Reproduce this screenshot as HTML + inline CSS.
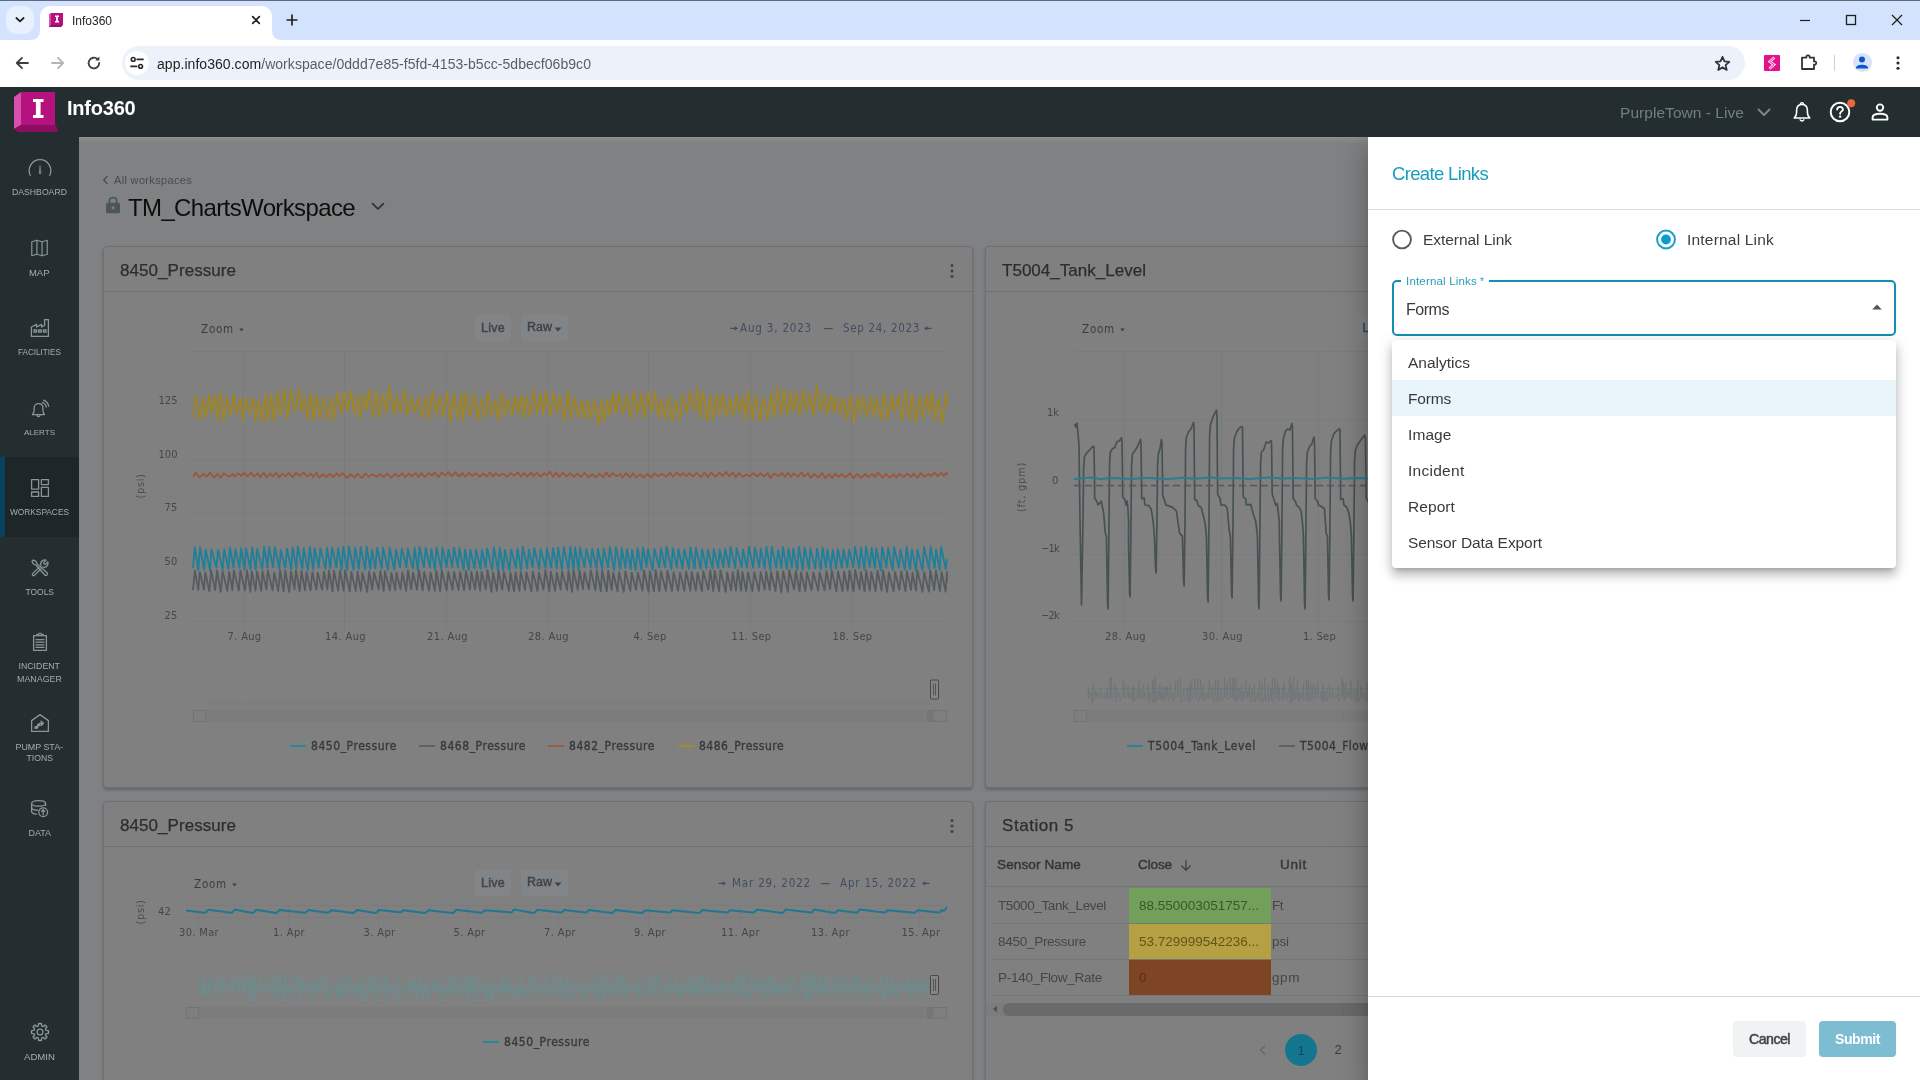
<!DOCTYPE html>
<html lang="en"><head><meta charset="utf-8"><title>Info360</title>
<style>
*{box-sizing:border-box;margin:0;padding:0}
html,body{width:1920px;height:1080px;overflow:hidden;background:#7f8182;font-family:"Liberation Sans",sans-serif}
.a{position:absolute}
.t{position:absolute;white-space:nowrap;display:block}
svg{position:absolute;overflow:visible}
#root{position:absolute;left:0;top:0;width:1920px;height:1080px;will-change:transform}

</style></head>
<body>
<div id="root">
<div class="a" style="left:0;top:0;width:1920px;height:40px;background:#d3e3fd;border-top:1px solid #5d6b7c"></div>
<div class="a" style="left:6px;top:6px;width:28px;height:28px;border-radius:10px;background:#e9f0fd"></div>
<svg style="left:14px;top:15px" width="12" height="10" viewBox="0 0 12 10"><path d="M2.4 3 L6 6.4 L9.6 3" fill="none" stroke="#1f1f1f" stroke-width="1.8" stroke-linecap="round" stroke-linejoin="round"/></svg>
<div class="a" style="left:40px;top:6px;width:232px;height:34px;background:#fff;border-radius:10px 10px 0 0"></div>
<svg style="left:30px;top:30px" width="252" height="10" viewBox="0 0 252 10"><path d="M0 10 Q10 10 10 0 L10 10 Z M252 10 Q242 10 242 0 L242 10 Z" fill="#fff"/></svg>
<svg style="left:48px;top:12px" width="16" height="16" viewBox="0 0 16 16"><path d="M1 3 L3 1 L15 1 L15 13 L13 15 L1 15 Z" fill="#8c1466"/><path d="M3 1 H15 V13 H3 Z" fill="#b5107f"/><path d="M1 3 L3 1 V13 L1 15 Z" fill="#d552a8"/><path d="M7 3.5 H11 V5 H9.9 V9 H11 V10.5 H7 V9 H8.1 V5 H7 Z" fill="#fff"/></svg>
<span class="t" style="left:72px;top:12.5px;font:400 12px/16px 'Liberation Sans',sans-serif;color:#1f1f1f;letter-spacing:-0.007px;">Info360</span>
<svg style="left:250px;top:14px" width="12" height="12" viewBox="0 0 12 12"><path d="M2.7 2.7 L9.3 9.3 M9.3 2.7 L2.7 9.3" stroke="#1f1f1f" stroke-width="1.7" stroke-linecap="round"/></svg>
<svg style="left:285px;top:13px" width="14" height="14" viewBox="0 0 14 14"><path d="M7 2.2 V11.8 M2.2 7 H11.8" stroke="#1f1f1f" stroke-width="1.7" stroke-linecap="round"/></svg>
<svg style="left:1799px;top:14px" width="12" height="12" viewBox="0 0 12 12"><path d="M1 6.5 H11" stroke="#1f1f1f" stroke-width="1.2"/></svg>
<svg style="left:1845px;top:14px" width="12" height="12" viewBox="0 0 12 12"><rect x="1.5" y="1.5" width="9" height="9" fill="none" stroke="#1f1f1f" stroke-width="1.3"/></svg>
<svg style="left:1891px;top:14px" width="12" height="12" viewBox="0 0 12 12"><path d="M1 1 L11 11 M11 1 L1 11" stroke="#1f1f1f" stroke-width="1.3"/></svg>
<div class="a" style="left:0;top:40px;width:1920px;height:47px;background:#fff"></div>
<svg style="left:14px;top:55px" width="16" height="16" viewBox="0 0 16 16"><path d="M14 8 H3 M8 2.8 L2.8 8 L8 13.2" fill="none" stroke="#3c3c3c" stroke-width="1.8" stroke-linecap="round" stroke-linejoin="round"/></svg>
<svg style="left:50px;top:55px" width="16" height="16" viewBox="0 0 16 16"><path d="M2 8 H13 M8 2.8 L13.2 8 L8 13.2" fill="none" stroke="#b4b4b4" stroke-width="1.8" stroke-linecap="round" stroke-linejoin="round"/></svg>
<svg style="left:86px;top:55px" width="16" height="16" viewBox="0 0 16 16"><path d="M13.2 8 A5.3 5.3 0 1 1 11.6 4.2" fill="none" stroke="#3c3c3c" stroke-width="1.8" stroke-linecap="round"/><path d="M9.2 5.6 H13.4 V1.4 Z" fill="#3c3c3c"/></svg>
<div class="a" style="left:122px;top:46px;width:1623px;height:34px;border-radius:17px;background:#edf1f9"></div>
<div class="a" style="left:125px;top:51px;width:24px;height:24px;border-radius:12px;background:#fff"></div>
<svg style="left:129px;top:56px" width="16" height="14" viewBox="0 0 16 14"><circle cx="4.2" cy="3.4" r="1.9" fill="none" stroke="#2a2a2a" stroke-width="1.6"/><path d="M8.2 3.4 H14" stroke="#2a2a2a" stroke-width="1.7" stroke-linecap="round"/><circle cx="11.6" cy="10.4" r="1.9" fill="none" stroke="#2a2a2a" stroke-width="1.6"/><path d="M2 10.4 H7.6" stroke="#2a2a2a" stroke-width="1.7" stroke-linecap="round"/></svg>
<span class="t" style="left:157px;top:54.5px;font:400 14px/18px 'Liberation Sans',sans-serif;color:#1f1f1f;letter-spacing:0.045px;">app.info360.com<span style="color:#5a5e63">/workspace/0ddd7e85-f5fd-4153-b5cc-5dbecf06b9c0</span></span>
<svg style="left:1713.5px;top:54.5px" width="17" height="17" viewBox="0 0 18 18"><path d="M9 2 L11.1 6.8 L16.2 7.3 L12.3 10.7 L13.5 15.8 L9 13.1 L4.5 15.8 L5.7 10.7 L1.8 7.3 L6.9 6.8 Z" fill="none" stroke="#30343a" stroke-width="1.9" stroke-linejoin="round"/></svg>
<div class="a" style="left:1764px;top:55px;width:16px;height:16px;border-radius:1px;background:#e3128c"></div>
<svg style="left:1764px;top:55px" width="16" height="16" viewBox="0 0 16 16"><path d="M10.4 2.4 L5.8 6.6 L10 9.6 L5.4 13.8" fill="none" stroke="#ffd9ee" stroke-width="2.7" stroke-linejoin="miter"/><path d="M10.4 2.4 L5.8 6.6 L10 9.6 L5.4 13.8" fill="none" stroke="#e3128c" stroke-width="0.8"/></svg>
<svg style="left:1799px;top:52px" width="20" height="20" viewBox="0 0 20 20"><path d="M3 5.6 H7.4 C6.6 2.6 11.4 2.6 10.6 5.6 H15 V9.4 C18 8.6 18 13.4 15 12.6 V17 H3 Z" fill="none" stroke="#30343a" stroke-width="1.8" stroke-linejoin="round"/></svg>
<div class="a" style="left:1834px;top:55px;width:1px;height:16px;background:#c3d0e6"></div>
<div class="a" style="left:1852.5px;top:53px;width:19px;height:19px;border-radius:10px;background:#d6e3fa"></div>
<svg style="left:1851px;top:52px" width="22" height="22" viewBox="0 0 22 22"><circle cx="11" cy="7.6" r="3" fill="#0b57d0"/><path d="M4.9 16.2 C4.9 11.6 17.1 11.6 17.1 16.2 V16.6 H4.9 Z" fill="#0b57d0"/></svg>
<svg style="left:1895px;top:54px" width="6" height="18" viewBox="0 0 6 18"><circle cx="3" cy="3.7" r="1.55" fill="#2a2a2a"/><circle cx="3" cy="9" r="1.55" fill="#2a2a2a"/><circle cx="3" cy="14.3" r="1.55" fill="#2a2a2a"/></svg>
<div class="a" style="left:0;top:87px;width:1920px;height:50px;background:#242e31"></div>
<svg style="left:14px;top:91px" width="44" height="42" viewBox="0 0 44 42"><path d="M0 6 L7 1 L7 34 L0 38 Z" fill="#d94fae"/><path d="M0 38 L7 34 L42 34 L44 41 L4 41 Z" fill="#8a0f60"/><path d="M7 1 H41 V34 H7 Z" fill="#b5117f"/><path d="M19 8 H29.5 V11 H26.6 V24 H29.5 V27 H19 V24 H21.9 V11 H19 Z" fill="#fff"/></svg>
<span class="t" style="left:67px;top:95.3px;font:700 20px/26px 'Liberation Sans',sans-serif;color:#ffffff;letter-spacing:-0.219px;">Info360</span>
<span class="t" style="left:1620px;top:102.5px;font:400 15.5px/20px 'Liberation Sans',sans-serif;color:#6f8085;letter-spacing:0.047px;">PurpleTown - Live</span>
<svg style="left:1757px;top:108px" width="14" height="9" viewBox="0 0 14 9"><path d="M1.5 1.5 L7 7 L12.5 1.5" fill="none" stroke="#7b8b90" stroke-width="1.8" stroke-linecap="round" stroke-linejoin="round"/></svg>
<svg style="left:1791px;top:101px" width="22" height="22" viewBox="0 0 22 22"><path d="M3.2 17 H18.8 C17.2 15.6 16.4 14 16.4 11.6 V9 C16.4 5.6 14.2 3.4 11 3.4 C7.8 3.4 5.6 5.6 5.6 9 V11.6 C5.6 14 4.8 15.6 3.2 17 Z" fill="none" stroke="#fff" stroke-width="1.6" stroke-linejoin="round"/><path d="M9.4 3.6 C9.4 1 12.6 1 12.6 3.6" fill="none" stroke="#fff" stroke-width="1.4"/><path d="M9 18.2 C9.2 20.6 12.8 20.6 13 18.2" fill="none" stroke="#fff" stroke-width="1.4"/></svg>
<svg style="left:1829px;top:98px" width="28" height="26" viewBox="0 0 28 26"><circle cx="11" cy="14" r="9.3" fill="none" stroke="#fff" stroke-width="2"/><path d="M8.2 11.6 C8.2 8 13.9 8 13.9 11.4 C13.9 13.4 11.1 13.4 11.1 15.8" fill="none" stroke="#fff" stroke-width="1.9" stroke-linecap="round"/><circle cx="11.1" cy="18.6" r="1.2" fill="#fff"/><circle cx="22.2" cy="5.2" r="4" fill="#e8683d"/></svg>
<svg style="left:1870px;top:102px" width="20" height="20" viewBox="0 0 20 20"><circle cx="10" cy="5.6" r="3.2" fill="none" stroke="#fff" stroke-width="1.9"/><path d="M2.6 17.6 V15.4 C2.6 10.6 17.4 10.6 17.4 15.4 V17.6 Z" fill="none" stroke="#fff" stroke-width="1.9" stroke-linejoin="round"/></svg>
<div class="a" style="left:0;top:137px;width:79px;height:943px;background:#242e31"></div>
<div class="a" style="left:0;top:457px;width:79px;height:80px;background:#1e2629"></div>
<div class="a" style="left:0;top:457px;width:5px;height:80px;background:#07425f"></div>
<svg style="left:27.5px;top:158.0px" width="24" height="24" viewBox="0 0 24 24" fill="none" stroke="#8a9598" stroke-width="1.3" stroke-linecap="round" stroke-linejoin="round"><path d="M2.3 17.25 A10.8 10.8 0 1 1 21.7 17.25"/><path d="M12 7.6 L11.2 15.4 A0.9 0.9 0 0 0 12.8 15.4 Z" fill="#8a9598" stroke-width="0.5"/></svg>
<svg style="left:30.0px;top:239.10000000000002px" width="19" height="18.4" viewBox="0 0 20 20" fill="none" stroke="#8a9598" stroke-width="1.3" stroke-linecap="round" stroke-linejoin="round"><path d="M1.6 3 L7.2 1.4 L12.8 3 L18.4 1.4 V16.6 L12.8 18.2 L7.2 16.6 L1.6 18.2 Z"/><path d="M7.2 1.4 V16.6 M12.8 3 V18.2"/></svg>
<svg style="left:29.5px;top:318.0px" width="20" height="20" viewBox="0 0 20 20" fill="none" stroke="#8a9598" stroke-width="1.3" stroke-linecap="round" stroke-linejoin="round"><path d="M1.4 18.4 V9 L6.6 6.4 V9 L11.6 6.4 V9 L14.6 7.4 V1.6 H18.4 V18.4 Z"/><rect x="4" y="12" width="2.6" height="2.2"/><rect x="8.7" y="12" width="2.6" height="2.2"/><rect x="13.4" y="12" width="2.6" height="2.2"/></svg>
<svg style="left:29.5px;top:399.0px" width="20" height="20" viewBox="0 0 20 20" fill="none" stroke="#8a9598" stroke-width="1.3" stroke-linecap="round" stroke-linejoin="round"><path d="M2.4 15.6 H14.6 C13.4 14.4 12.9 13 12.9 11.2 V9.4 C12.9 6.4 11 4.6 8.5 4.6 C6 4.6 4.1 6.4 4.1 9.4 V11.2 C4.1 13 3.6 14.4 2.4 15.6 Z"/><path d="M7 16.2 C7.2 18 9.8 18 10 16.2"/><path d="M12.4 3.4 C14.4 4.2 15.8 5.8 16.4 8"/><path d="M13.6 1.2 C16.2 2.2 18 4.4 18.8 7.4"/></svg>
<svg style="left:29.5px;top:478.0px" width="20" height="20" viewBox="0 0 20 20" fill="none" stroke="#8a9598" stroke-width="1.3" stroke-linecap="round" stroke-linejoin="round"><rect x="1.6" y="1.6" width="7" height="9.6"/><rect x="11.4" y="1.6" width="7" height="5"/><rect x="1.6" y="14" width="7" height="4.4"/><rect x="11.4" y="9.4" width="7" height="9"/></svg>
<svg style="left:29.5px;top:558.0px" width="20" height="20" viewBox="0 0 20 20" fill="none" stroke="#8a9598" stroke-width="1.3" stroke-linecap="round" stroke-linejoin="round"><path d="M2 3.4 L3.4 2 L6 3.4 L7 5.8 L16.8 14.6 C18.6 16.2 16.2 18.6 14.6 16.8 L5.8 7 L3.4 6 Z"/><path d="M9.2 9.4 L2.6 15.6 C1.6 16.6 3.4 18.4 4.4 17.4 L10.8 11"/><path d="M11 7.6 C10.4 5.6 11 3.6 12.6 2.6 C13.8 1.8 15 1.8 16 2.2 L13.6 4.6 L14 6 L15.4 6.4 L17.8 4 C18.2 5 18.2 6.2 17.4 7.4 C16.4 9 14.4 9.6 12.6 9"/></svg>
<svg style="left:31.5px;top:632.0px" width="16" height="20" viewBox="0 0 16 20" fill="none" stroke="#8a9598" stroke-width="1.3" stroke-linecap="round" stroke-linejoin="round"><rect x="1.6" y="3.6" width="12.8" height="14.8"/><path d="M5 3.6 V2.4 H6.6 C6.8 0.8 9.2 0.8 9.4 2.4 H11 V3.6"/><path d="M4 7.6 H12 M4 10.2 H12 M4 12.8 H12 M4 15.4 H12"/></svg>
<svg style="left:29.5px;top:713.0px" width="20" height="20" viewBox="0 0 20 20" fill="none" stroke="#8a9598" stroke-width="1.3" stroke-linecap="round" stroke-linejoin="round"><path d="M1.6 18.4 V7.6 L10 1.6 L18.4 7.6 V18.4 Z"/><path d="M5 15 H7.6 V12.6 H9.4 V10.4 H12.4 M11 8.4 L13.4 10.4 L11 12.4" stroke-width="1.5"/><rect x="4.6" y="13" width="2.6" height="2.6" fill="#8a9598" stroke="none"/><rect x="7" y="10.8" width="2.4" height="2.4" fill="#8a9598" stroke="none"/></svg>
<svg style="left:29.5px;top:798.8px" width="20" height="20" viewBox="0 0 20 20" fill="none" stroke="#8a9598" stroke-width="1.3" stroke-linecap="round" stroke-linejoin="round"><ellipse cx="8.6" cy="4.4" rx="7" ry="2.8"/><path d="M1.6 4.4 V8.4 C1.6 10 4.6 11.2 8 11.2"/><path d="M15.6 4.4 V6.4"/><path d="M1.6 8.4 V12.4 C1.6 13.8 3.6 14.8 6.4 15.2"/><circle cx="13.2" cy="13.2" r="4.4"/><path d="M13.2 15.8 V11 M11.6 12.4 L13.2 10.8 L14.8 12.4"/></svg>
<svg style="left:29.5px;top:1022.0px" width="20" height="20" viewBox="0 0 20 20" fill="none" stroke="#8a9598" stroke-width="1.3" stroke-linecap="round" stroke-linejoin="round"><path d="M8.55 1.52 L11.45 1.52 L11.56 3.90 L13.21 4.58 L14.96 2.98 L17.02 5.04 L15.42 6.79 L16.10 8.44 L18.48 8.55 L18.48 11.45 L16.10 11.56 L15.42 13.21 L17.02 14.96 L14.96 17.02 L13.21 15.42 L11.56 16.10 L11.45 18.48 L8.55 18.48 L8.44 16.10 L6.79 15.42 L5.04 17.02 L2.98 14.96 L4.58 13.21 L3.90 11.56 L1.52 11.45 L1.52 8.55 L3.90 8.44 L4.58 6.79 L2.98 5.04 L5.04 2.98 L6.79 4.58 L8.44 3.90 Z"/><circle cx="10" cy="10" r="2.9"/></svg>
<span class="t" style="left:12px;top:187.0px;font:400 8.68px/11px 'Liberation Sans',sans-serif;color:#a3adb0;">DASHBOARD</span>
<span class="t" style="left:29px;top:266.5px;font:400 9.46px/12px 'Liberation Sans',sans-serif;color:#a3adb0;">MAP</span>
<span class="t" style="left:18px;top:347.0px;font:400 8.15px/11px 'Liberation Sans',sans-serif;color:#a3adb0;">FACILITIES</span>
<span class="t" style="left:24px;top:427.5px;font:400 8.01px/10px 'Liberation Sans',sans-serif;color:#a3adb0;">ALERTS</span>
<span class="t" style="left:10px;top:507.0px;font:400 8.32px/11px 'Liberation Sans',sans-serif;color:#a3adb0;">WORKSPACES</span>
<span class="t" style="left:25.5px;top:587.0px;font:400 8.45px/11px 'Liberation Sans',sans-serif;color:#a3adb0;">TOOLS</span>
<span class="t" style="left:18.5px;top:661.0px;font:400 8.79px/11px 'Liberation Sans',sans-serif;color:#a3adb0;">INCIDENT</span>
<span class="t" style="left:17px;top:672.5px;font:400 8.9px/12px 'Liberation Sans',sans-serif;color:#a3adb0;">MANAGER</span>
<span class="t" style="left:15.5px;top:740.5px;font:400 8.88px/12px 'Liberation Sans',sans-serif;color:#a3adb0;">PUMP STA-</span>
<span class="t" style="left:26.5px;top:753.0px;font:400 8.67px/11px 'Liberation Sans',sans-serif;color:#a3adb0;">TIONS</span>
<span class="t" style="left:28.5px;top:826.5px;font:400 8.94px/12px 'Liberation Sans',sans-serif;color:#a3adb0;">DATA</span>
<span class="t" style="left:24px;top:1050.0px;font:400 9.62px/13px 'Liberation Sans',sans-serif;color:#a3adb0;">ADMIN</span>
<div class="a" style="left:79px;top:137px;width:1289px;height:943px;background:#7f8182"></div>
<div class="a" style="left:79px;top:137px;width:1289px;height:6px;background:linear-gradient(#8b9092,#7f8182)"></div>
<svg style="left:102px;top:175px" width="7" height="10" viewBox="0 0 7 10"><path d="M5 1.4 L1.8 5 L5 8.6" fill="none" stroke="#45494c" stroke-width="1.2" stroke-linecap="round" stroke-linejoin="round"/></svg>
<span class="t" style="left:114px;top:173.0px;font:400 11px/14px 'Liberation Sans',sans-serif;color:#484c4f;letter-spacing:0.331px;">All workspaces</span>
<svg style="left:105px;top:196px" width="16" height="18" viewBox="0 0 16 18"><rect x="1" y="6.8" width="14" height="10.4" rx="1.5" fill="#4b5659"/><path d="M4.4 7 V4.8 C4.4 0.6 11.6 0.6 11.6 4.8 V7" fill="none" stroke="#4b5659" stroke-width="1.8"/><circle cx="8" cy="11.8" r="1.5" fill="#7f8182"/></svg>
<span class="t" style="left:128px;top:192.0px;font:400 24px/31px 'Liberation Sans',sans-serif;color:#0d0d0d;letter-spacing:-0.628px;">TM_ChartsWorkspace</span>
<svg style="left:371px;top:202px" width="14" height="9" viewBox="0 0 14 9"><path d="M1.6 1.6 L7 7 L12.4 1.6" fill="none" stroke="#2c2f31" stroke-width="1.7" stroke-linecap="round" stroke-linejoin="round"/></svg>
<div class="a" style="left:103px;top:246px;width:870px;height:542px;background:#808080;border-radius:4px;border:1px solid #6c7075;box-shadow:0 2px 3px rgba(0,0,0,.22);"></div>
<div class="a" style="left:104px;top:291px;width:868px;height:1px;background:#6e7071"></div>
<span class="t" style="left:120px;top:259.5px;font:400 17px/22px 'Liberation Sans',sans-serif;color:#2d2d2d;letter-spacing:0.053px;-webkit-text-stroke:0.25px #2d2d2d;">8450_Pressure</span>
<svg style="left:949.5px;top:263px" width="4" height="16" viewBox="0 0 4 16"><circle cx="2" cy="2.4" r="1.5" fill="#3e4143"/><circle cx="2" cy="8" r="1.5" fill="#3e4143"/><circle cx="2" cy="13.6" r="1.5" fill="#3e4143"/></svg>
<div class="a" style="left:985px;top:246px;width:383px;height:542px;background:#808080;border-radius:4px;border:1px solid #6c7075;border-right:none;border-radius:4px 0 0 4px;box-shadow:0 2px 3px rgba(0,0,0,.22);"></div>
<div class="a" style="left:986px;top:291px;width:382px;height:1px;background:#6e7071"></div>
<span class="t" style="left:1002px;top:259.5px;font:400 17px/22px 'Liberation Sans',sans-serif;color:#2d2d2d;letter-spacing:0.021px;-webkit-text-stroke:0.25px #2d2d2d;">T5004_Tank_Level</span>
<div class="a" style="left:103px;top:801px;width:870px;height:290px;background:#808080;border-radius:4px 4px 0 0;border:1px solid #6c7075;border-bottom:none;box-shadow:0 2px 3px rgba(0,0,0,.22);"></div>
<div class="a" style="left:104px;top:846px;width:868px;height:1px;background:#6e7071"></div>
<span class="t" style="left:120px;top:814.5px;font:400 17px/22px 'Liberation Sans',sans-serif;color:#2d2d2d;letter-spacing:0.053px;-webkit-text-stroke:0.25px #2d2d2d;">8450_Pressure</span>
<svg style="left:949.5px;top:818px" width="4" height="16" viewBox="0 0 4 16"><circle cx="2" cy="2.4" r="1.5" fill="#3e4143"/><circle cx="2" cy="8" r="1.5" fill="#3e4143"/><circle cx="2" cy="13.6" r="1.5" fill="#3e4143"/></svg>
<div class="a" style="left:985px;top:801px;width:383px;height:290px;background:#808080;border-radius:4px 4px 0 0;border:1px solid #6c7075;border-bottom:none;border-right:none;border-radius:4px 0 0 4px;box-shadow:0 2px 3px rgba(0,0,0,.22);"></div>
<div class="a" style="left:986px;top:846px;width:382px;height:1px;background:#6e7071"></div>
<span class="t" style="left:1002px;top:814.5px;font:400 17px/22px 'Liberation Sans',sans-serif;color:#2d2d2d;letter-spacing:0.543px;-webkit-text-stroke:0.25px #2d2d2d;">Station 5</span>
<svg style="left:0;top:0" width="1920" height="1080" viewBox="0 0 1920 1080"><path d="M193 351.5 H947" stroke="#7a7b7c" stroke-width="1"/>
<path d="M193 405.5 H947" stroke="#7a7b7c" stroke-width="1"/>
<path d="M193 459.5 H947" stroke="#7a7b7c" stroke-width="1"/>
<path d="M193 513.5 H947" stroke="#7a7b7c" stroke-width="1"/>
<path d="M193 567.5 H947" stroke="#7a7b7c" stroke-width="1"/>
<path d="M193 621.5 H947" stroke="#7a7b7c" stroke-width="1"/>
<path d="M243.5 352 V631" stroke="#787a7b" stroke-width="1"/>
<path d="M344.5 352 V631" stroke="#787a7b" stroke-width="1"/>
<path d="M446.5 352 V631" stroke="#787a7b" stroke-width="1"/>
<path d="M547.5 352 V631" stroke="#787a7b" stroke-width="1"/>
<path d="M648.5 352 V631" stroke="#787a7b" stroke-width="1"/>
<path d="M750.5 352 V631" stroke="#787a7b" stroke-width="1"/>
<path d="M851.5 352 V631" stroke="#787a7b" stroke-width="1"/>
<path d="M193.0 417.2 L196.3 395.5 L199.9 420.5 L203.4 397.9 L205.8 416.9 L209.5 394.5 L211.5 412.9 L215.1 396.2 L217.6 421.9 L220.3 391.9 L223.7 421.3 L227.0 397.7 L230.5 415.2 L234.0 393.8 L236.7 414.1 L240.5 398.5 L243.1 419.8 L245.8 397.3 L249.6 413.0 L253.5 397.3 L255.2 421.0 L258.6 400.5 L261.7 422.5 L265.5 393.8 L267.6 421.8 L271.3 394.1 L273.8 420.9 L277.6 391.6 L280.6 415.8 L284.3 389.3 L287.6 418.6 L290.6 390.3 L295.3 411.2 L299.1 388.9 L301.7 411.7 L304.6 397.4 L307.9 418.9 L311.0 392.3 L313.7 420.8 L316.7 395.4 L320.2 419.4 L323.5 397.2 L327.6 419.6 L331.5 397.2 L333.8 420.5 L337.7 392.3 L341.4 414.0 L344.6 391.5 L347.2 411.6 L350.8 391.3 L354.5 414.0 L357.4 394.6 L360.3 418.0 L364.2 394.1 L366.6 409.9 L369.3 389.3 L373.2 416.9 L376.4 391.0 L379.2 416.6 L383.2 394.3 L386.2 412.7 L389.0 386.5 L393.8 414.4 L396.5 395.2 L400.4 413.0 L404.4 388.8 L407.2 415.1 L410.9 396.9 L414.5 412.3 L418.1 397.7 L422.0 418.4 L425.8 395.9 L428.9 418.8 L432.4 391.2 L435.9 414.4 L439.5 395.7 L443.1 417.4 L446.9 391.8 L450.3 422.7 L453.6 393.2 L457.4 418.3 L461.3 393.5 L463.1 420.5 L466.0 393.1 L470.6 416.2 L474.5 393.7 L477.6 419.9 L481.4 398.6 L485.1 418.3 L488.2 391.3 L491.8 415.4 L495.4 400.5 L498.0 421.0 L501.1 392.6 L504.6 416.1 L507.7 398.2 L512.2 415.3 L515.0 396.1 L518.0 413.4 L521.1 395.8 L523.7 418.7 L526.5 396.0 L529.9 416.5 L533.4 390.1 L536.9 413.6 L540.8 394.5 L543.0 413.9 L545.7 391.0 L550.1 416.0 L553.2 392.4 L556.8 413.6 L560.1 395.2 L564.4 421.1 L568.0 391.1 L571.0 417.7 L574.2 397.1 L578.4 417.6 L581.7 399.5 L584.5 419.0 L588.1 400.8 L590.7 418.6 L594.7 400.4 L597.9 424.9 L601.8 399.3 L603.8 422.5 L607.5 399.4 L609.6 415.5 L613.3 392.9 L615.9 413.4 L618.8 393.9 L623.1 413.7 L627.0 394.5 L630.7 419.3 L634.1 390.9 L637.8 414.2 L641.7 393.7 L644.2 418.4 L648.1 392.1 L651.6 412.6 L655.0 391.8 L658.3 417.3 L661.1 399.4 L665.1 419.5 L668.5 396.0 L672.2 422.3 L675.4 400.1 L679.7 419.7 L682.6 394.5 L687.0 413.2 L690.1 391.7 L694.0 410.8 L697.7 387.9 L700.1 418.6 L703.2 392.2 L707.0 420.9 L709.8 394.8 L713.2 419.9 L716.5 393.4 L719.7 414.7 L722.7 393.9 L726.7 416.6 L730.2 397.9 L732.9 415.9 L736.8 394.1 L739.2 412.2 L743.2 397.6 L745.2 419.8 L748.2 391.1 L752.5 419.2 L755.4 395.1 L759.6 421.0 L763.2 397.9 L767.2 420.0 L770.9 393.9 L774.3 417.0 L777.1 387.2 L781.1 414.6 L784.0 389.3 L787.2 414.1 L791.1 391.1 L793.0 412.5 L796.8 392.8 L799.7 416.1 L803.2 389.2 L806.8 411.2 L810.1 394.4 L813.3 416.0 L816.7 386.1 L820.8 411.8 L824.6 393.5 L827.3 413.9 L831.3 395.4 L833.5 412.3 L837.2 396.9 L840.0 414.2 L843.6 398.2 L847.2 419.6 L850.0 394.8 L853.9 422.1 L857.4 396.2 L860.0 413.6 L863.2 397.0 L866.9 416.6 L870.9 395.8 L874.0 416.5 L876.7 397.8 L881.2 420.2 L883.9 392.6 L887.6 420.1 L891.5 394.3 L894.3 412.0 L898.4 395.4 L901.7 420.9 L905.4 390.0 L909.2 419.7 L912.1 394.0 L916.1 422.7 L919.4 396.4 L923.0 418.2 L926.6 395.1 L929.3 413.5 L932.0 390.8 L935.1 420.2 L938.3 398.3 L942.3 423.4 L946.2 392.6 L947.0 404.5" fill="none" stroke="#a08520" stroke-width="1.75" stroke-linejoin="round" opacity="1" />
<path d="M193.0 476.7 L196.0 472.6 L199.6 477.6 L203.4 473.8 L206.7 476.6 L210.0 472.7 L214.4 477.8 L217.3 473.8 L221.0 477.6 L223.7 473.1 L228.7 476.9 L232.8 473.9 L234.8 476.6 L238.0 473.1 L241.0 475.8 L244.0 473.0 L247.7 476.5 L251.1 472.5 L253.6 476.6 L257.8 473.5 L260.2 477.3 L263.9 472.8 L266.6 477.3 L270.5 473.4 L272.5 476.4 L276.0 472.9 L279.3 477.4 L282.2 473.6 L285.5 476.3 L288.6 472.8 L292.7 477.3 L295.7 472.7 L299.5 475.9 L303.6 472.5 L307.3 476.6 L311.1 473.4 L313.2 477.1 L316.4 472.7 L319.1 477.6 L323.2 474.0 L326.0 477.4 L329.8 473.6 L333.2 477.2 L336.6 473.3 L339.6 476.5 L342.6 473.2 L347.3 477.9 L350.7 474.2 L354.6 477.6 L357.7 473.8 L361.9 478.1 L365.2 473.4 L368.7 476.7 L372.3 474.4 L376.5 476.8 L380.1 474.2 L384.0 476.9 L387.3 473.7 L391.0 477.9 L395.0 474.0 L398.8 476.5 L402.6 473.3 L404.8 477.1 L408.9 473.5 L411.8 476.3 L415.3 473.2 L418.5 476.9 L421.7 473.1 L424.7 477.0 L428.4 473.1 L431.9 475.6 L434.7 472.6 L438.7 477.1 L441.9 472.5 L445.2 475.4 L448.5 472.1 L451.5 476.1 L455.5 472.4 L458.8 476.6 L462.4 473.0 L465.2 476.7 L469.1 472.6 L472.2 476.1 L475.9 473.2 L480.0 476.7 L483.3 473.5 L486.6 476.7 L489.8 472.4 L492.9 476.4 L495.7 473.3 L499.4 475.9 L502.7 473.6 L507.1 476.6 L510.7 473.2 L514.2 475.9 L517.8 472.3 L520.9 476.5 L524.2 473.1 L527.1 476.6 L531.2 472.5 L533.1 476.1 L537.0 472.8 L540.5 476.6 L544.4 473.2 L546.8 475.4 L550.0 471.6 L553.0 476.9 L556.2 472.2 L559.3 477.1 L562.9 472.5 L566.5 476.7 L570.0 473.3 L574.1 476.9 L577.5 473.5 L580.7 477.0 L584.5 472.9 L588.5 477.3 L592.2 474.3 L595.8 477.2 L599.4 473.8 L603.4 477.2 L606.3 472.3 L609.4 477.1 L612.3 473.0 L616.5 476.2 L620.3 474.0 L622.4 477.8 L625.9 473.2 L629.9 477.4 L633.1 473.2 L635.9 477.5 L640.0 474.4 L643.7 477.5 L647.7 473.8 L651.0 477.7 L654.4 473.6 L658.5 476.3 L661.8 473.7 L666.4 476.5 L670.1 472.9 L673.1 476.8 L676.7 472.2 L680.0 476.0 L683.2 473.0 L686.1 476.5 L689.1 473.3 L693.2 476.6 L696.4 472.9 L701.2 477.0 L704.5 472.6 L707.8 477.1 L711.1 472.7 L715.7 476.8 L719.3 472.7 L722.6 475.9 L726.3 471.9 L729.0 476.3 L732.7 472.6 L735.7 477.4 L738.8 473.0 L742.9 476.9 L746.3 474.2 L749.7 476.3 L753.1 473.1 L757.1 476.3 L760.6 473.4 L764.0 476.6 L767.7 473.0 L770.5 478.0 L774.3 473.4 L778.4 476.2 L782.3 473.0 L784.9 477.1 L787.7 472.4 L791.0 476.7 L793.9 473.3 L797.6 476.6 L801.7 472.4 L804.0 476.5 L808.0 473.4 L810.6 477.9 L814.4 473.8 L818.1 477.7 L822.1 473.1 L825.2 478.0 L829.2 474.1 L832.0 478.1 L835.3 473.6 L838.0 476.7 L841.6 474.2 L845.7 477.2 L849.7 473.4 L853.5 478.2 L857.0 474.0 L861.4 477.7 L865.3 474.0 L868.3 476.9 L872.3 473.9 L875.0 477.1 L877.9 472.5 L882.8 477.5 L885.8 474.0 L889.8 477.7 L893.8 474.3 L896.1 477.5 L899.3 473.8 L903.5 477.1 L907.3 473.6 L910.9 477.2 L913.7 473.6 L917.5 477.6 L920.8 473.1 L924.5 476.9 L928.7 474.0 L931.0 476.2 L935.1 472.4 L937.5 476.3 L941.3 472.8 L943.7 475.8 L946.7 472.7 L947.0 475.0" fill="none" stroke="#9d553d" stroke-width="1.8" stroke-linejoin="round" opacity="1" />
<path d="M193.0 568.0 L194.8 547.2 L198.3 570.0 L200.0 547.0 L204.1 569.7 L205.7 549.5 L210.0 570.4 L211.4 549.6 L216.3 567.6 L218.1 549.9 L222.6 569.6 L224.2 549.2 L228.4 569.0 L230.0 547.6 L233.5 567.5 L235.4 549.0 L239.4 567.8 L241.1 548.1 L244.6 569.8 L246.0 548.2 L250.5 569.1 L252.1 547.3 L255.8 569.8 L257.1 548.8 L262.3 569.1 L264.2 546.7 L267.4 567.6 L269.1 547.1 L273.0 567.4 L274.9 547.2 L279.4 569.2 L280.8 550.0 L285.3 567.9 L287.0 548.6 L291.2 569.2 L292.7 547.6 L296.4 568.0 L297.8 546.7 L302.4 568.5 L303.7 548.1 L307.9 570.2 L309.8 546.9 L313.3 569.5 L314.6 548.2 L318.8 567.5 L320.3 548.3 L325.4 568.6 L327.1 547.6 L330.3 568.7 L332.1 547.4 L336.4 567.4 L338.1 547.8 L341.7 569.5 L343.2 546.6 L347.3 570.2 L348.9 546.5 L353.5 569.8 L355.1 547.7 L358.9 568.9 L360.7 546.9 L365.2 569.7 L366.7 546.6 L370.3 569.2 L372.1 550.1 L375.3 568.6 L377.1 547.7 L381.7 568.5 L383.0 547.4 L388.1 570.0 L389.6 547.7 L394.3 569.7 L396.1 549.9 L400.1 567.2 L401.8 548.7 L406.5 567.3 L407.8 548.4 L412.8 568.6 L414.7 547.6 L417.8 570.3 L419.5 546.9 L423.9 567.4 L425.7 548.0 L429.9 567.5 L431.3 549.2 L434.9 569.4 L436.5 547.5 L441.2 568.9 L442.5 547.4 L446.6 567.1 L448.5 549.6 L452.3 566.9 L453.9 547.4 L457.9 567.3 L459.3 547.9 L463.6 569.8 L465.0 549.5 L468.8 570.1 L470.3 549.7 L474.6 568.6 L476.0 549.2 L480.6 569.0 L481.9 549.6 L485.7 567.5 L487.1 548.3 L492.2 569.6 L493.9 547.4 L498.0 570.5 L499.8 547.7 L503.3 570.3 L504.8 549.8 L509.4 570.1 L511.3 549.4 L515.8 568.0 L517.5 548.6 L521.1 570.0 L522.8 546.7 L527.1 568.3 L528.9 549.7 L532.6 567.6 L534.3 548.0 L539.1 568.9 L540.6 548.9 L545.6 568.0 L546.9 548.2 L551.2 567.6 L553.1 548.1 L556.8 568.5 L558.1 547.3 L561.9 569.3 L563.8 547.2 L568.4 569.4 L570.3 546.8 L573.5 570.0 L575.1 547.3 L578.7 570.4 L580.0 547.3 L584.5 567.3 L586.3 549.0 L590.8 567.4 L592.1 548.7 L596.6 568.6 L598.0 549.0 L602.2 569.0 L603.7 548.6 L608.1 567.2 L609.8 546.8 L614.1 569.9 L616.0 547.4 L620.3 569.7 L621.7 548.1 L625.4 568.0 L627.0 549.1 L630.7 569.3 L632.0 549.7 L635.7 570.1 L637.6 548.1 L641.4 570.0 L643.0 547.4 L646.5 567.2 L648.0 549.2 L652.7 570.1 L654.3 548.8 L659.2 567.6 L661.0 548.3 L665.0 567.6 L666.6 546.6 L671.3 569.3 L672.8 548.5 L676.9 567.5 L678.5 549.3 L682.5 568.6 L684.3 549.2 L688.9 568.5 L690.3 547.4 L694.6 568.7 L695.9 547.8 L700.7 568.8 L702.1 549.3 L706.4 568.5 L707.9 549.4 L712.5 568.5 L713.8 549.0 L718.2 567.9 L719.7 549.6 L723.3 567.0 L725.2 548.6 L729.0 567.1 L730.6 546.7 L735.2 568.2 L736.6 548.0 L741.7 567.4 L743.0 549.5 L747.0 567.9 L748.9 547.0 L753.2 567.9 L754.9 547.6 L759.3 567.0 L760.9 548.7 L764.6 568.8 L766.4 546.7 L770.4 569.9 L771.7 546.6 L776.4 567.9 L778.1 550.1 L781.5 568.2 L782.9 547.0 L786.8 568.6 L788.6 548.6 L791.8 567.9 L793.2 548.7 L797.1 569.4 L798.9 546.9 L802.8 569.7 L804.6 547.5 L808.9 568.8 L810.4 548.4 L815.2 568.3 L817.0 548.6 L820.8 569.6 L822.6 547.5 L825.9 567.3 L827.3 549.7 L831.0 569.2 L832.7 549.7 L836.2 568.5 L837.8 549.1 L841.9 567.9 L843.4 549.2 L847.4 567.3 L849.2 549.6 L853.3 567.1 L855.0 546.8 L859.2 568.0 L861.0 548.0 L864.4 569.8 L866.0 546.7 L869.8 567.0 L871.6 548.0 L874.9 568.3 L876.2 548.7 L880.9 570.5 L882.2 547.1 L886.4 567.6 L888.1 548.0 L892.8 570.0 L894.1 547.1 L899.0 567.7 L900.5 549.6 L904.8 569.8 L906.7 546.7 L910.0 569.2 L911.9 549.5 L916.0 570.5 L917.4 549.9 L922.6 570.3 L924.0 546.9 L929.0 568.9 L930.6 546.7 L934.6 568.2 L936.0 549.7 L939.7 569.8 L941.1 546.8 L945.7 569.1 L947.0 558.5" fill="none" stroke="#1d7f99" stroke-width="1.8" stroke-linejoin="round" opacity="1" />
<path d="M193.0 590.1 L194.9 570.7 L198.3 590.0 L199.8 571.9 L203.9 589.9 L205.3 572.5 L209.4 591.3 L211.1 570.4 L215.2 590.2 L217.0 570.3 L220.7 591.8 L222.6 571.1 L227.3 590.8 L229.2 571.9 L232.4 590.4 L233.8 570.3 L238.8 590.6 L240.4 570.6 L245.0 590.6 L246.9 570.2 L250.4 591.9 L251.8 571.4 L255.5 590.7 L257.1 571.3 L261.2 590.8 L262.5 571.3 L266.5 589.6 L267.8 570.4 L272.6 590.4 L274.3 572.6 L278.2 591.0 L280.1 570.7 L283.6 591.5 L285.2 570.7 L289.2 591.9 L291.1 571.6 L294.5 589.4 L296.0 570.1 L299.7 591.5 L301.5 570.7 L305.0 590.3 L306.5 572.1 L310.5 590.5 L312.4 572.1 L316.3 589.7 L317.8 572.6 L322.1 589.9 L324.0 571.7 L327.4 589.4 L328.9 570.7 L332.5 591.4 L333.9 570.7 L338.2 590.5 L340.0 570.7 L343.7 590.8 L345.1 570.4 L349.8 591.6 L351.3 571.8 L355.8 591.0 L357.6 571.5 L360.8 590.9 L362.4 572.6 L367.2 591.8 L369.1 571.5 L372.2 589.6 L374.2 572.4 L378.6 589.4 L380.4 570.8 L383.7 591.0 L385.0 571.2 L389.9 590.6 L391.4 572.7 L395.2 590.1 L396.5 572.7 L400.5 589.3 L402.4 572.4 L406.1 590.8 L408.0 570.1 L411.2 589.4 L413.0 572.7 L417.0 589.7 L418.9 570.2 L422.7 590.4 L424.2 571.9 L429.2 590.8 L430.5 572.4 L434.9 590.9 L436.3 570.6 L440.2 591.3 L441.7 570.2 L446.6 590.5 L448.3 571.9 L452.6 589.9 L454.0 572.0 L458.6 590.1 L460.1 571.9 L464.1 590.3 L465.9 571.0 L469.9 589.7 L471.3 571.8 L475.0 589.6 L476.9 571.5 L480.1 590.6 L481.7 571.7 L485.7 589.4 L487.5 570.1 L491.4 591.8 L493.1 572.5 L496.9 590.9 L498.5 571.0 L502.3 589.7 L503.9 572.2 L509.0 590.8 L510.4 572.5 L514.1 591.5 L515.5 572.3 L519.4 590.9 L520.8 572.1 L525.1 589.9 L526.4 572.3 L531.4 591.3 L532.8 571.5 L537.5 591.0 L538.9 572.4 L543.5 589.7 L545.3 570.2 L549.4 591.4 L550.7 571.3 L555.1 590.9 L556.8 572.7 L560.6 589.5 L562.0 571.3 L567.1 589.9 L568.5 571.2 L572.1 591.8 L573.5 570.3 L577.8 589.8 L579.7 571.2 L583.0 589.3 L584.5 572.3 L588.9 589.4 L590.8 570.4 L595.4 590.5 L596.9 570.7 L600.8 591.5 L602.1 570.7 L606.8 591.4 L608.2 570.6 L611.7 590.0 L613.2 572.5 L617.5 591.4 L619.0 572.2 L623.8 592.0 L625.4 571.4 L630.3 590.8 L631.7 572.4 L636.0 590.0 L637.9 572.6 L642.5 590.6 L644.0 570.3 L648.5 591.9 L650.0 571.2 L653.9 591.1 L655.7 570.0 L659.4 591.3 L660.9 571.2 L665.9 590.9 L667.4 570.7 L672.0 591.2 L673.6 572.1 L678.1 590.7 L680.0 572.6 L684.3 590.8 L686.1 571.3 L690.4 590.9 L691.7 572.0 L695.8 590.6 L697.6 572.6 L701.9 591.4 L703.2 571.1 L708.3 589.7 L710.2 570.5 L713.3 591.2 L714.6 570.9 L719.1 591.4 L720.4 570.2 L725.7 592.0 L727.2 572.4 L731.1 590.4 L732.8 572.3 L736.0 590.5 L737.9 570.1 L741.1 590.8 L742.4 571.8 L746.2 591.1 L747.9 572.3 L752.4 591.1 L754.3 572.2 L758.9 590.9 L760.7 572.2 L764.7 589.8 L766.2 571.3 L769.7 590.1 L771.1 572.2 L775.5 591.1 L777.4 571.2 L781.3 592.0 L783.2 571.4 L787.9 591.9 L789.2 570.2 L794.1 589.3 L795.8 571.0 L799.6 591.6 L801.0 572.2 L805.4 591.0 L806.9 572.4 L811.6 590.3 L813.3 572.5 L818.2 590.5 L819.6 572.5 L824.6 590.2 L826.4 571.0 L830.1 589.4 L831.8 570.6 L836.4 591.4 L838.0 571.3 L842.6 591.2 L844.1 571.5 L847.7 590.5 L849.5 570.7 L853.5 591.7 L855.2 570.0 L859.5 589.5 L861.0 571.9 L864.6 591.3 L866.2 570.5 L869.8 590.6 L871.3 571.9 L875.6 591.2 L877.5 570.3 L881.5 590.7 L883.0 570.5 L887.1 591.9 L888.9 572.4 L893.6 591.3 L895.1 572.0 L899.3 590.0 L901.2 571.3 L905.5 591.5 L906.9 571.1 L911.1 590.2 L912.5 572.6 L916.0 590.7 L917.4 570.6 L922.5 591.9 L924.2 572.3 L928.9 591.7 L930.3 570.3 L934.2 590.1 L935.9 570.6 L939.9 591.1 L941.6 571.9 L945.6 591.7 L947.0 572.0 L947.0 581.0" fill="none" stroke="#555c60" stroke-width="1.8" stroke-linejoin="round" opacity="1" />
<path d="M205.0 678.4 L209.5 677.3 L214.8 678.3 L219.3 677.4 L222.4 678.6 L226.2 677.7 L230.7 678.7 L236.1 677.7 L240.7 678.4 L244.9 677.5 L248.7 678.2 L252.6 677.7 L256.7 678.2 L261.3 677.4 L265.6 678.7 L270.8 677.4 L275.4 678.7 L280.6 677.7 L285.1 678.4 L288.9 677.5 L295.0 678.7 L300.2 677.5 L303.6 678.5 L309.0 677.4 L311.4 678.7 L316.7 677.5 L320.3 678.4 L324.3 677.6 L329.5 678.4 L333.4 677.4 L339.6 678.6 L343.8 677.3 L347.5 678.3 L351.7 677.6 L356.9 678.2 L361.3 677.8 L367.2 678.4 L371.7 677.4 L375.5 678.2 L379.2 677.7 L385.2 678.5 L388.9 677.4 L393.7 678.5 L397.4 677.4 L403.8 678.2 L408.2 677.4 L414.0 678.5 L417.6 677.3 L423.9 678.3 L428.6 677.5 L433.1 678.3 L437.7 677.4 L442.8 678.8 L448.2 677.2 L452.1 678.4 L456.8 677.4 L460.8 678.2 L464.7 677.3 L468.8 678.8 L472.6 677.8 L478.2 678.7 L482.4 677.5 L486.4 678.7 L490.7 677.7 L495.5 678.8 L500.7 677.7 L505.3 678.8 L509.0 677.7 L513.5 678.3 L518.3 677.4 L521.2 678.6 L526.4 677.4 L530.2 678.4 L534.0 677.6 L539.2 678.3 L543.4 677.6 L548.3 678.4 L553.4 677.8 L556.9 678.6 L560.7 677.2 L564.8 678.3 L569.2 677.6 L572.5 678.4 L577.0 677.4 L581.2 678.7 L585.6 677.4 L590.8 678.3 L595.2 677.4 L599.5 678.5 L604.8 677.3 L608.4 678.5 L613.6 677.7 L617.7 678.3 L622.9 677.6 L627.2 678.6 L631.5 677.6 L637.1 678.2 L640.7 677.4 L645.6 678.5 L650.2 677.3 L654.1 678.2 L658.5 677.3 L664.3 678.3 L668.5 677.6 L673.8 678.6 L678.0 677.4 L683.7 678.7 L687.7 677.6 L692.1 678.6 L696.6 677.5 L701.4 678.6 L705.7 677.4 L709.6 678.2 L714.7 677.8 L719.2 678.8 L722.8 677.6 L728.7 678.6 L733.3 677.3 L737.2 678.5 L741.4 677.3 L747.0 678.3 L750.7 677.3 L755.7 678.4 L760.7 677.7 L765.9 678.2 L770.5 677.3 L775.9 678.3 L779.9 677.2 L785.8 678.4 L790.2 677.7 L794.3 678.6 L798.5 677.6 L804.4 678.8 L808.9 677.6 L812.6 678.6 L816.2 677.5 L822.0 678.4 L825.8 677.8 L831.2 678.5 L836.1 677.5 L839.0 678.3 L842.7 677.4 L848.1 678.4 L853.0 677.5 L856.2 678.3 L861.4 677.6 L864.4 678.3 L869.0 677.8 L874.7 678.6 L880.0 677.7 L882.4 678.6 L887.1 677.7 L891.8 678.7 L896.3 677.8 L900.0 678.2 L905.0 677.7 L910.0 678.6 L914.3 677.3 L919.1 678.3 L923.0 677.2 L927.9 678.4 L930.0 678.0" fill="none" stroke="#a58a1c" stroke-width="1" stroke-linejoin="round" opacity="0.13" />
<path d="M205.0 688.4 L210.4 687.6 L213.0 688.2 L218.2 687.6 L223.2 688.4 L228.5 687.8 L233.4 688.2 L238.5 687.7 L241.8 688.4 L246.5 687.9 L251.6 688.1 L256.4 687.7 L259.9 688.1 L264.9 687.9 L269.3 688.4 L274.1 687.6 L277.1 688.3 L282.4 687.7 L286.2 688.3 L291.4 687.6 L294.8 688.3 L299.5 687.7 L303.7 688.2 L307.4 687.9 L312.3 688.3 L317.5 687.9 L321.3 688.3 L326.5 687.6 L330.4 688.4 L334.7 687.6 L338.2 688.3 L342.9 687.6 L347.7 688.5 L352.8 687.9 L356.6 688.2 L361.1 687.7 L366.9 688.2 L371.8 687.8 L375.5 688.2 L380.2 687.9 L383.2 688.3 L387.4 687.6 L392.7 688.3 L396.4 687.9 L401.3 688.5 L405.4 687.8 L409.5 688.4 L413.9 687.6 L418.1 688.2 L423.2 687.5 L426.7 688.2 L430.7 687.7 L435.4 688.2 L439.8 687.6 L443.7 688.4 L448.5 687.6 L453.7 688.2 L458.2 687.7 L461.5 688.3 L466.5 687.5 L470.9 688.1 L474.9 687.7 L478.9 688.4 L484.0 687.5 L487.6 688.2 L492.6 687.9 L496.7 688.4 L501.2 687.6 L505.1 688.4 L509.6 687.8 L515.0 688.1 L519.3 687.8 L524.7 688.3 L528.6 687.6 L532.4 688.3 L537.0 687.9 L540.5 688.3 L545.2 687.7 L550.2 688.5 L555.1 687.8 L560.1 688.5 L564.0 687.7 L570.3 688.1 L575.0 687.8 L578.8 688.1 L583.7 687.9 L588.7 688.2 L592.8 687.6 L596.5 688.1 L600.1 687.6 L604.4 688.3 L608.3 687.7 L613.2 688.4 L617.3 687.7 L623.2 688.1 L626.8 687.9 L632.2 688.4 L636.2 687.6 L640.2 688.5 L645.3 687.5 L649.2 688.2 L652.9 687.6 L657.9 688.1 L662.3 687.8 L665.6 688.2 L670.5 687.6 L674.1 688.5 L677.9 687.7 L683.8 688.4 L688.6 687.8 L691.5 688.1 L695.7 687.6 L701.0 688.1 L705.4 687.7 L709.2 688.3 L713.8 687.8 L717.5 688.2 L721.5 687.7 L727.0 688.3 L731.0 687.7 L735.6 688.2 L741.0 687.7 L743.9 688.3 L748.8 687.5 L753.2 688.4 L757.0 687.8 L762.7 688.4 L767.0 687.8 L771.1 688.5 L776.1 687.6 L781.3 688.3 L785.1 687.6 L790.2 688.4 L794.7 687.6 L799.1 688.3 L803.7 687.6 L807.2 688.2 L811.0 687.5 L817.1 688.3 L821.8 687.6 L825.9 688.2 L830.9 687.7 L833.7 688.4 L837.5 687.9 L843.8 688.3 L848.7 687.7 L851.9 688.1 L856.3 687.7 L859.7 688.3 L864.0 687.6 L869.0 688.2 L873.2 687.8 L876.8 688.2 L881.9 687.7 L884.9 688.5 L889.0 687.8 L894.7 688.2 L899.5 687.8 L903.3 688.5 L907.3 687.6 L912.0 688.5 L916.1 687.9 L921.7 688.5 L926.7 687.7 L930.0 688.0" fill="none" stroke="#a0543a" stroke-width="1" stroke-linejoin="round" opacity="0.1" />
<path d="M205.0 701.3 L206.7 700.4 L208.9 701.7 L210.7 700.2 L212.6 701.8 L214.2 700.5 L216.5 701.7 L218.4 699.9 L220.8 701.6 L222.9 700.7 L224.7 701.5 L226.7 700.4 L228.4 702.1 L230.6 700.4 L232.4 701.6 L234.1 700.1 L236.7 702.0 L238.4 699.8 L240.5 701.7 L242.3 700.2 L244.2 701.9 L246.3 700.0 L247.8 701.4 L250.0 700.0 L251.8 701.3 L254.2 700.0 L256.4 702.1 L258.0 700.6 L260.6 701.3 L263.0 700.3 L265.2 701.5 L267.6 700.2 L268.8 702.1 L270.6 700.7 L273.4 702.0 L275.4 700.0 L277.4 701.4 L279.4 700.7 L281.3 701.9 L283.6 700.7 L285.6 701.8 L287.8 700.4 L289.3 701.9 L291.5 700.3 L293.3 701.4 L295.4 700.1 L297.4 701.4 L299.8 699.9 L301.5 701.7 L303.5 700.3 L305.4 701.5 L307.3 700.6 L309.0 701.4 L311.1 700.0 L312.9 701.8 L315.1 700.3 L317.1 701.7 L319.2 700.1 L321.6 702.1 L323.9 700.3 L326.0 701.6 L327.8 700.1 L329.8 701.9 L331.6 700.2 L333.7 701.4 L335.7 700.0 L337.4 702.1 L339.2 700.6 L341.4 702.1 L343.1 700.3 L345.3 701.4 L347.6 700.0 L349.9 701.6 L352.2 700.1 L353.8 702.1 L355.4 700.5 L357.6 701.5 L359.3 700.7 L361.8 702.0 L364.1 700.0 L365.2 701.6 L367.4 700.3 L369.5 701.7 L371.7 700.4 L373.6 701.9 L375.3 700.6 L377.2 701.8 L379.3 700.3 L381.7 701.8 L383.8 700.5 L386.2 701.9 L388.6 700.7 L389.7 701.8 L392.0 699.8 L393.6 701.5 L395.6 700.0 L397.5 702.1 L399.4 700.6 L401.6 701.8 L403.5 700.4 L405.5 702.0 L407.6 700.7 L409.6 701.6 L411.7 700.7 L414.2 701.6 L415.8 700.6 L418.0 701.8 L419.7 700.2 L422.6 701.5 L424.7 700.1 L426.2 701.6 L428.3 700.3 L430.3 702.1 L432.2 699.9 L434.4 701.9 L436.6 700.4 L438.5 702.0 L440.8 700.1 L442.2 701.7 L444.4 700.1 L446.8 702.2 L448.8 700.7 L450.3 701.5 L452.5 699.9 L454.9 701.3 L457.1 699.9 L458.4 701.4 L460.7 700.4 L462.4 701.9 L464.8 700.4 L466.8 702.0 L469.0 699.9 L471.2 702.0 L472.8 700.4 L474.8 701.3 L477.0 700.5 L478.9 701.7 L481.0 699.9 L483.2 701.9 L485.2 700.7 L487.1 701.4 L489.0 700.4 L491.2 701.4 L493.5 700.6 L494.8 702.1 L497.2 700.4 L498.7 701.7 L500.7 700.3 L502.8 701.3 L505.1 700.1 L507.0 701.4 L509.3 700.7 L510.5 701.7 L512.3 700.3 L515.1 701.5 L516.9 700.2 L519.6 701.8 L521.6 700.0 L523.0 701.6 L525.2 700.5 L526.6 701.7 L528.8 700.2 L530.0 701.3 L532.2 700.2 L534.4 701.9 L536.3 700.3 L538.7 701.8 L540.6 700.5 L542.3 701.4 L544.0 700.6 L546.7 701.5 L548.9 700.5 L550.8 701.3 L552.9 700.7 L554.4 701.9 L556.4 700.7 L558.6 701.6 L560.9 700.2 L562.9 701.6 L564.7 699.9 L566.3 701.9 L567.9 700.3 L570.1 701.3 L572.2 700.6 L573.8 702.1 L575.6 700.7 L577.7 701.3 L579.4 700.4 L582.0 702.0 L584.3 700.5 L586.5 701.3 L588.7 700.5 L590.8 701.9 L592.9 700.6 L594.3 701.8 L596.5 699.9 L597.7 702.1 L599.7 700.6 L601.6 702.1 L603.4 700.3 L605.9 701.8 L608.0 700.6 L610.2 701.3 L612.0 700.3 L614.5 701.4 L616.8 700.6 L618.6 701.6 L620.5 700.5 L623.1 701.4 L624.8 700.7 L627.2 702.0 L629.5 700.4 L630.8 701.2 L633.0 700.6 L634.5 701.7 L636.6 700.2 L638.8 702.1 L640.7 699.8 L642.7 701.3 L644.5 700.6 L646.4 702.0 L648.2 700.0 L649.9 702.0 L652.2 699.8 L653.9 702.0 L655.5 700.2 L658.2 702.2 L660.1 700.3 L662.4 702.1 L664.2 700.5 L665.9 702.1 L667.6 700.0 L669.5 702.1 L671.5 700.3 L673.5 701.4 L675.2 700.4 L676.9 701.7 L679.2 699.8 L680.8 701.9 L682.4 700.5 L685.4 701.7 L687.6 700.6 L689.7 701.7 L692.0 700.6 L694.0 701.9 L696.1 700.1 L698.3 702.0 L700.6 699.9 L702.8 701.8 L704.9 700.7 L706.4 702.1 L708.2 700.2 L710.0 702.1 L711.6 700.1 L713.8 702.1 L716.2 699.8 L718.2 702.0 L719.8 700.5 L722.7 702.0 L724.6 700.6 L727.1 702.0 L729.2 700.7 L731.6 702.0 L733.2 700.0 L735.7 702.0 L737.6 700.2 L740.2 701.6 L742.3 700.0 L744.5 701.5 L746.5 700.3 L748.0 701.8 L750.4 700.7 L751.8 701.5 L754.2 700.5 L755.6 701.4 L757.7 700.2 L760.1 701.6 L761.8 699.8 L764.4 701.4 L766.2 700.3 L768.0 701.7 L769.9 700.5 L771.7 701.9 L774.1 699.9 L775.5 701.9 L777.5 700.6 L779.1 701.5 L781.2 700.3 L783.2 702.0 L785.1 700.6 L787.3 701.8 L789.1 699.8 L790.9 701.5 L793.1 699.9 L794.6 701.6 L796.6 700.8 L798.9 701.8 L801.0 700.6 L802.7 701.8 L804.9 700.5 L806.3 701.8 L808.1 699.9 L810.6 702.1 L812.2 700.5 L814.8 702.1 L817.2 700.5 L819.1 701.5 L820.9 700.0 L822.6 701.6 L824.4 700.5 L826.2 701.9 L828.0 700.6 L830.2 701.5 L832.4 700.1 L834.8 702.1 L837.1 700.5 L838.6 701.4 L840.8 700.1 L842.8 701.6 L844.8 700.7 L847.1 702.0 L848.8 700.4 L850.9 701.2 L853.1 700.6 L854.7 701.6 L856.6 700.2 L859.0 701.7 L861.1 700.3 L863.0 701.8 L865.1 700.4 L867.0 701.8 L869.2 700.2 L870.5 702.0 L872.1 700.1 L874.3 701.8 L876.1 700.2 L878.1 701.9 L880.3 699.9 L881.5 701.8 L883.6 700.2 L886.1 701.5 L888.4 699.8 L889.7 701.4 L892.0 699.9 L894.2 701.6 L896.5 700.3 L898.2 702.0 L899.9 700.1 L901.7 702.2 L903.3 700.3 L905.5 702.2 L907.3 700.0 L909.6 701.9 L911.9 700.7 L913.2 701.6 L915.0 700.3 L917.0 701.9 L918.6 700.0 L921.5 701.5 L923.9 700.1 L926.0 701.9 L927.9 700.6 L929.5 701.8 L930.0 701.0" fill="none" stroke="#1f88a3" stroke-width="1" stroke-linejoin="round" opacity="0.1" />
<path d="M205.0 703.9 L207.4 702.5 L209.2 704.6 L210.9 703.0 L213.5 704.0 L215.8 703.2 L217.0 704.2 L219.2 702.7 L220.8 703.8 L223.0 703.1 L224.4 704.4 L226.4 702.7 L228.8 703.8 L231.2 702.4 L232.4 704.1 L234.6 703.3 L236.8 704.4 L239.1 702.4 L240.8 704.6 L242.8 702.9 L245.4 704.6 L247.7 703.0 L249.4 704.5 L251.2 702.9 L253.6 704.3 L255.5 702.8 L258.0 704.5 L260.0 702.7 L262.4 704.5 L264.1 702.7 L266.2 704.3 L267.8 703.2 L270.4 703.9 L272.5 702.7 L274.3 704.5 L276.2 702.6 L278.8 703.9 L280.4 702.6 L282.9 704.0 L285.0 703.2 L286.6 704.3 L288.4 703.0 L290.5 704.7 L292.1 703.1 L294.9 704.2 L296.6 702.7 L298.5 704.7 L300.1 703.2 L302.5 704.0 L304.9 703.1 L306.1 704.5 L308.1 702.4 L310.4 704.2 L312.2 702.9 L314.4 704.1 L316.8 703.1 L318.8 704.4 L320.5 702.4 L323.3 704.4 L325.1 702.9 L327.0 704.4 L329.1 703.2 L330.7 704.4 L332.5 703.2 L334.8 704.2 L337.0 703.0 L338.4 704.7 L340.6 703.0 L342.1 704.5 L344.2 703.0 L345.7 704.4 L348.1 702.8 L350.3 704.5 L352.3 703.2 L354.1 704.5 L356.5 702.8 L357.9 704.6 L360.2 702.6 L361.8 704.2 L363.5 702.8 L366.4 703.9 L368.6 703.1 L370.5 704.4 L372.7 703.0 L374.2 704.6 L376.4 703.2 L378.2 704.1 L379.9 702.8 L382.1 703.9 L384.4 702.4 L386.3 703.8 L388.2 702.3 L390.3 704.2 L392.3 703.2 L394.5 703.9 L396.2 702.9 L398.1 704.1 L400.2 703.0 L402.6 704.5 L404.6 703.2 L406.3 704.2 L408.0 702.8 L410.1 704.2 L412.2 702.5 L414.3 704.2 L415.9 702.6 L418.5 704.2 L420.5 702.9 L422.8 703.9 L425.1 702.9 L426.4 704.3 L428.6 702.9 L429.9 704.5 L431.9 702.5 L434.5 704.5 L436.6 703.2 L438.8 704.5 L441.1 702.7 L442.8 704.0 L445.0 702.8 L446.6 704.0 L448.7 703.1 L450.1 704.7 L451.9 702.8 L453.9 704.6 L455.5 703.1 L458.2 703.9 L460.1 702.4 L462.6 703.8 L464.9 702.9 L466.6 704.6 L468.7 703.2 L471.2 704.3 L473.5 702.6 L475.5 704.1 L477.4 702.5 L479.0 704.4 L481.3 702.3 L483.4 704.6 L485.7 703.2 L487.8 703.7 L489.4 702.5 L492.0 704.1 L493.8 703.2 L496.1 704.1 L498.0 702.8 L500.4 704.0 L502.6 702.6 L504.2 703.8 L506.3 703.2 L508.7 704.0 L510.6 703.2 L512.8 704.3 L514.4 703.2 L517.3 704.3 L519.0 702.7 L521.9 704.1 L524.0 702.3 L526.2 704.1 L528.3 702.4 L530.6 704.0 L532.4 702.5 L534.9 703.8 L536.7 702.7 L538.6 704.2 L540.7 702.5 L543.1 703.9 L544.7 702.9 L546.9 704.6 L548.8 702.5 L550.6 703.7 L552.6 702.5 L554.1 704.6 L556.1 702.7 L558.4 703.9 L560.1 702.8 L561.9 704.4 L563.9 703.1 L565.8 704.5 L567.7 703.2 L569.4 704.6 L571.2 703.1 L572.9 704.1 L574.7 703.0 L577.1 703.8 L579.2 702.7 L581.0 704.6 L583.1 702.6 L584.6 704.2 L586.7 703.2 L588.4 704.7 L590.3 703.2 L593.0 704.1 L594.6 703.1 L596.4 704.5 L598.5 702.5 L601.0 704.1 L602.8 703.1 L604.4 704.1 L606.6 702.9 L608.5 704.3 L610.1 702.4 L611.9 704.1 L613.5 703.1 L615.7 704.4 L617.6 703.1 L620.3 704.6 L621.9 702.6 L624.4 703.8 L626.5 702.4 L628.9 704.3 L630.6 703.2 L632.7 704.4 L634.9 702.7 L636.7 704.0 L638.7 702.8 L640.6 704.4 L642.8 702.9 L644.2 704.5 L646.3 702.8 L648.4 704.0 L650.0 702.9 L652.4 704.4 L654.1 702.4 L656.6 704.3 L658.2 702.8 L660.7 704.3 L662.4 702.6 L664.4 703.9 L666.6 703.2 L668.5 704.5 L670.8 702.7 L672.7 704.5 L674.6 702.9 L677.3 704.5 L679.1 702.9 L681.5 704.2 L683.5 702.5 L686.0 704.4 L687.8 702.5 L690.3 704.4 L692.4 702.9 L694.5 704.4 L696.6 702.8 L699.0 704.5 L701.0 702.9 L703.0 704.6 L705.4 702.6 L707.4 704.6 L709.5 703.2 L711.5 704.5 L713.9 703.0 L716.1 704.4 L717.8 702.4 L720.0 704.4 L721.9 702.6 L724.5 703.9 L726.7 702.4 L728.2 703.9 L729.9 702.5 L732.7 704.3 L735.1 702.9 L737.1 704.4 L738.8 702.8 L740.5 704.4 L742.6 702.3 L744.9 703.9 L746.9 702.4 L749.3 704.1 L751.3 702.9 L753.6 704.1 L755.3 702.3 L757.1 704.3 L759.5 702.8 L761.5 704.0 L763.8 703.1 L765.8 704.2 L767.6 702.5 L769.3 704.5 L771.1 702.6 L773.6 703.8 L775.7 702.8 L777.1 704.0 L779.1 703.1 L781.7 704.5 L783.6 702.9 L785.7 704.4 L787.6 702.4 L789.7 703.8 L791.9 702.5 L793.5 704.6 L795.2 702.4 L797.8 704.4 L799.8 702.5 L802.0 704.2 L803.8 702.8 L805.7 704.2 L808.0 702.4 L810.0 704.5 L812.3 703.0 L813.9 703.8 L815.8 703.1 L818.3 703.8 L820.5 703.2 L822.5 704.4 L824.8 702.3 L826.5 703.8 L828.7 702.4 L830.9 704.4 L833.1 702.8 L835.5 703.9 L837.2 702.5 L839.0 704.4 L840.6 703.0 L843.4 704.3 L845.5 703.2 L847.7 704.5 L849.5 703.2 L852.1 704.3 L854.4 703.1 L856.0 703.9 L858.2 702.7 L860.5 704.3 L862.3 702.6 L864.9 704.3 L867.3 703.1 L868.4 704.2 L870.3 702.3 L872.5 704.0 L874.6 702.7 L876.4 704.6 L878.8 702.4 L879.9 704.7 L882.1 702.7 L883.7 704.3 L885.7 702.8 L887.5 704.3 L889.4 703.2 L891.7 703.9 L894.1 702.3 L895.5 704.2 L897.4 702.5 L899.6 703.8 L901.3 702.9 L903.2 703.8 L905.4 702.6 L907.3 704.1 L909.2 703.2 L911.3 704.5 L913.4 702.5 L915.3 704.5 L917.3 702.9 L919.2 703.8 L921.3 703.0 L923.7 704.3 L925.5 703.2 L928.1 704.6 L930.0 703.5" fill="none" stroke="#556468" stroke-width="1" stroke-linejoin="round" opacity="0.12" />
<rect x="193" y="710" width="754" height="12" fill="#7c7c7c"/>
<rect x="193.5" y="710.5" width="12" height="11" fill="#7f7f7f" stroke="#737373"/>
<rect x="927.5" y="710.5" width="19" height="11" fill="#7f7f7f" stroke="#737373"/>
<rect x="927.5" y="710.5" width="6" height="11" fill="#767676"/>
<rect x="930.5" y="680.0" width="8" height="19" rx="1" fill="#858585" stroke="#474849" stroke-width="1"/>
<path d="M933.5 683.5 V695.5 M935.5 683.5 V695.5" stroke="#474849" stroke-width="0.8"/>
<path d="M1074 351.5 H1368" stroke="#7a7b7c" stroke-width="1"/>
<path d="M1074 419.5 H1368" stroke="#7a7b7c" stroke-width="1"/>
<path d="M1074 486.5 H1368" stroke="#7a7b7c" stroke-width="1"/>
<path d="M1074 554.5 H1368" stroke="#7a7b7c" stroke-width="1"/>
<path d="M1074 621.5 H1368" stroke="#7a7b7c" stroke-width="1"/>
<path d="M1124.5 352 V631" stroke="#787a7b" stroke-width="1"/>
<path d="M1221.5 352 V631" stroke="#787a7b" stroke-width="1"/>
<path d="M1318.5 352 V631" stroke="#787a7b" stroke-width="1"/>
<path d="M1074.5 424.0 L1076.0 427.0 L1077.0 423.0 L1079.0 445.0 L1080.0 520.0 L1081.5 605.0 L1083.0 520.0 L1083.6 468.0 L1084.4 457.0 L1086.7 452.9 L1089.0 450.7 L1091.2 448.2 L1093.5 446.2 L1094.0 447.0 L1094.4 470.0 L1094.7 498.4 L1097.0 501.6 L1098.0 505.0 L1101.3 501.2 L1103.6 512.7 L1105.3 533.3 L1106.4 536.0 L1107.6 605.0 L1108.1 609.0 L1109.0 520.0 L1109.6 463.0 L1110.4 452.0 L1112.6 448.5 L1114.8 447.6 L1117.1 441.5 L1119.3 441.0 L1121.5 437.7 L1122.0 442.0 L1122.4 470.0 L1122.7 497.3 L1125.0 499.9 L1126.0 505.0 L1127.2 501.1 L1128.0 510.2 L1128.7 524.6 L1128.4 536.0 L1129.6 593.0 L1130.1 597.0 L1131.0 520.0 L1131.6 465.0 L1132.4 454.0 L1135.1 450.4 L1137.8 446.0 L1140.5 439.3 L1141.0 444.0 L1141.4 470.0 L1141.7 498.8 L1144.0 497.7 L1145.0 505.0 L1148.6 505.3 L1151.2 509.3 L1153.1 521.0 L1154.4 536.0 L1155.6 569.0 L1156.1 573.0 L1157.0 520.0 L1157.6 465.0 L1158.4 454.0 L1160.0 448.4 L1161.5 439.5 L1162.0 444.0 L1162.4 470.0 L1162.7 495.3 L1165.0 501.9 L1166.0 505.0 L1172.1 507.1 L1176.4 510.9 L1179.6 533.5 L1182.4 536.0 L1183.6 582.0 L1184.1 586.0 L1185.0 520.0 L1185.6 448.0 L1186.4 437.0 L1188.8 431.5 L1191.1 428.6 L1193.5 422.5 L1194.0 427.0 L1194.4 470.0 L1194.7 499.6 L1197.0 500.5 L1198.0 505.0 L1201.3 507.8 L1203.6 516.9 L1205.3 524.9 L1206.4 536.0 L1207.6 598.0 L1208.1 602.0 L1209.0 520.0 L1209.6 436.0 L1210.4 425.0 L1212.4 418.6 L1214.5 414.0 L1216.5 410.2 L1217.0 415.0 L1217.4 470.0 L1217.7 494.4 L1220.0 498.5 L1221.0 505.0 L1224.6 505.2 L1227.2 508.0 L1229.1 529.8 L1230.4 536.0 L1231.6 594.0 L1232.1 598.0 L1233.0 520.0 L1233.6 449.0 L1234.4 438.0 L1236.9 431.5 L1239.5 427.7 L1242.0 426.6 L1242.5 428.0 L1242.9 470.0 L1243.2 496.9 L1245.5 498.6 L1246.5 505.0 L1250.7 504.4 L1253.6 515.0 L1255.8 521.7 L1257.4 536.0 L1258.6 605.0 L1259.1 609.0 L1260.0 520.0 L1260.6 463.0 L1261.4 452.0 L1263.8 449.6 L1266.2 442.1 L1268.6 443.0 L1271.0 440.7 L1271.5 442.0 L1271.9 470.0 L1272.2 494.1 L1274.5 500.9 L1275.5 505.0 L1277.2 503.6 L1278.4 513.8 L1279.3 521.1 L1279.4 536.0 L1280.6 597.0 L1281.1 601.0 L1282.0 520.0 L1282.6 449.0 L1283.4 438.0 L1285.6 431.0 L1287.7 428.9 L1289.9 430.0 L1292.0 423.5 L1292.5 428.0 L1292.9 470.0 L1293.2 498.5 L1295.5 501.6 L1296.5 505.0 L1299.3 507.6 L1301.2 511.4 L1302.7 525.6 L1303.4 536.0 L1304.6 605.0 L1305.1 609.0 L1306.0 520.0 L1306.6 463.0 L1307.4 452.0 L1309.6 446.5 L1311.8 444.0 L1314.0 437.0 L1314.5 442.0 L1314.9 470.0 L1315.2 498.5 L1317.5 501.0 L1318.5 505.0 L1322.0 507.0 L1324.4 508.4 L1326.2 533.3 L1327.4 536.0 L1328.6 596.0 L1329.1 600.0 L1330.0 520.0 L1330.6 452.0 L1331.4 441.0 L1334.1 433.3 L1336.8 430.9 L1339.5 428.6 L1340.0 431.0 L1340.4 470.0 L1340.7 499.5 L1343.0 498.7 L1344.0 505.0 L1346.9 507.5 L1349.0 513.5 L1350.6 525.1 L1351.4 536.0 L1352.6 597.0 L1353.1 601.0 L1354.0 520.0 L1354.6 461.0 L1355.4 450.0 L1357.8 444.3 L1360.2 440.9 L1362.6 437.6 L1365.0 435.2 L1365.5 440.0 L1365.9 470.0 L1366.2 498.1 L1368.5 502.0 L1369.5 505.0 L1372.3 502.1 L1374.2 508.5 L1375.7 533.8 L1376.4 536.0 L1377.6 600.0 L1378.1 604.0 L1379.0 520.0 L1379.6 454.0 L1380.4 443.0 L1382.9 437.5 L1385.5 433.2 L1388.0 428.7 L1388.5 433.0 L1388.9 470.0 L1389.2 497.6 L1391.5 501.1 L1392.5 505.0 L1396.0 504.2 L1398.4 512.2 L1400.2 521.7 L1401.4 536.0 L1402.6 596.0 L1403.1 600.0" fill="none" stroke="#475154" stroke-width="1.7" stroke-linejoin="round" opacity="1" />
<path d="M1074.0 478.9 L1090.1 477.5 L1100.5 478.9 L1113.4 477.9 L1132.0 478.9 L1146.7 477.7 L1166.4 478.9 L1184.1 477.7 L1193.7 478.8 L1211.5 477.5 L1221.2 478.6 L1238.9 477.9 L1249.9 478.9 L1267.8 477.4 L1282.0 478.4 L1295.3 477.9 L1314.1 478.9 L1327.4 477.4 L1342.6 478.8 L1358.5 477.9 L1368.0 478.2" fill="none" stroke="#2b7d91" stroke-width="2" stroke-linejoin="round" opacity="1" />
<path d="M1074 485.5 H1368" stroke="#54585a" stroke-width="1.6" stroke-dasharray="7 4"/>
<path d="M1088 690 L1088.0 697.7 L1088.6 689.9 L1089.2 697.8 L1090.8 692.7 L1091.4 692.5 L1092.0 703.0 L1092.7 694.2 L1093.3 682.4 L1093.9 699.7 L1095.2 696.8 L1095.8 690.5 L1096.4 697.5 L1097.1 692.9 L1097.7 693.6 L1098.3 699.4 L1100.3 691.8 L1100.9 687.2 L1101.5 698.6 L1103.7 695.3 L1104.3 692.9 L1104.9 699.3 L1106.5 695.8 L1107.1 687.9 L1107.7 700.0 L1109.2 695.1 L1109.8 677.8 L1110.4 697.9 L1110.8 694.4 L1111.4 677.0 L1112.0 698.2 L1114.1 696.1 L1114.7 683.6 L1115.3 702.3 L1116.2 697.1 L1116.8 687.6 L1117.4 697.8 L1119.1 695.8 L1119.7 692.2 L1120.3 701.2 L1122.4 694.5 L1123.0 678.8 L1123.6 698.2 L1124.2 694.6 L1124.8 684.5 L1125.4 697.4 L1127.4 695.9 L1128.0 684.9 L1128.6 698.3 L1129.4 693.4 L1130.0 693.8 L1130.6 698.6 L1131.7 696.8 L1132.3 687.2 L1132.9 702.3 L1133.5 692.2 L1134.1 686.9 L1134.7 701.0 L1136.9 696.4 L1137.5 690.4 L1138.1 698.8 L1138.4 693.4 L1139.0 680.2 L1139.6 698.0 L1140.7 693.9 L1141.3 689.8 L1141.9 699.7 L1143.0 693.0 L1143.6 683.4 L1144.2 697.6 L1144.7 694.6 L1145.3 692.1 L1145.9 699.2 L1147.7 696.0 L1148.3 684.9 L1148.9 702.9 L1149.3 692.0 L1149.9 693.7 L1150.5 699.3 L1151.9 693.5 L1152.5 680.6 L1153.1 702.8 L1153.4 692.5 L1154.0 679.0 L1154.6 702.3 L1155.0 696.3 L1155.6 676.6 L1156.2 702.9 L1157.6 697.8 L1158.2 690.8 L1158.8 699.6 L1159.3 694.5 L1159.9 683.1 L1160.5 699.8 L1161.1 695.1 L1161.7 691.8 L1162.3 699.7 L1162.8 696.1 L1163.4 686.1 L1164.0 701.3 L1165.2 693.5 L1165.8 686.9 L1166.4 698.4 L1167.1 691.8 L1167.7 686.0 L1168.3 701.4 L1169.9 691.2 L1170.5 683.0 L1171.1 699.2 L1172.2 697.8 L1172.8 692.3 L1173.4 701.5 L1174.7 692.4 L1175.3 681.3 L1175.9 698.4 L1177.2 695.5 L1177.8 680.6 L1178.4 697.0 L1179.9 696.2 L1180.5 677.6 L1181.1 702.6 L1183.2 693.1 L1183.8 690.0 L1184.4 700.3 L1186.6 697.6 L1187.2 687.4 L1187.8 702.1 L1189.1 697.7 L1189.7 682.7 L1190.3 701.7 L1191.1 692.4 L1191.7 678.8 L1192.3 699.2 L1194.4 693.2 L1195.0 678.8 L1195.6 698.7 L1197.1 695.8 L1197.7 678.8 L1198.3 702.6 L1200.0 695.2 L1200.6 679.2 L1201.2 699.2 L1202.3 694.7 L1202.9 685.2 L1203.5 702.0 L1204.3 696.1 L1204.9 692.8 L1205.5 698.6 L1206.6 696.8 L1207.2 691.9 L1207.8 698.6 L1208.7 694.5 L1209.3 679.5 L1209.9 698.7 L1211.9 693.5 L1212.5 686.6 L1213.1 702.8 L1214.9 692.7 L1215.5 680.5 L1216.1 701.9 L1217.5 693.6 L1218.1 679.1 L1218.7 701.7 L1220.5 695.6 L1221.1 687.0 L1221.7 701.7 L1223.9 696.5 L1224.5 677.4 L1225.1 697.8 L1226.5 691.6 L1227.1 681.7 L1227.7 699.8 L1229.7 697.5 L1230.3 677.7 L1230.9 697.6 L1232.3 695.6 L1232.9 678.4 L1233.5 698.9 L1233.9 697.0 L1234.5 677.4 L1235.1 700.9 L1236.1 696.7 L1236.7 679.1 L1237.3 701.3 L1238.8 693.1 L1239.4 688.3 L1240.0 699.1 L1240.9 691.8 L1241.5 684.6 L1242.1 701.3 L1243.0 692.8 L1243.6 691.1 L1244.2 699.3 L1245.4 691.7 L1246.0 679.9 L1246.6 698.3 L1247.4 696.2 L1248.0 690.8 L1248.6 697.7 L1249.0 696.2 L1249.6 684.0 L1250.2 702.0 L1251.6 697.2 L1252.2 688.1 L1252.8 701.4 L1254.0 697.6 L1254.6 683.9 L1255.2 703.0 L1257.3 693.3 L1257.9 691.6 L1258.5 699.4 L1259.1 691.4 L1259.7 680.3 L1260.3 702.3 L1261.7 693.9 L1262.3 683.0 L1262.9 702.6 L1264.3 697.5 L1264.9 677.9 L1265.5 701.2 L1267.7 693.6 L1268.3 685.2 L1268.9 702.1 L1270.2 695.8 L1270.8 688.4 L1271.4 699.9 L1271.9 694.5 L1272.5 678.9 L1273.1 702.8 L1274.4 693.0 L1275.0 677.1 L1275.6 698.3 L1276.9 696.8 L1277.5 680.2 L1278.1 700.9 L1278.7 691.2 L1279.3 686.9 L1279.9 699.2 L1281.9 695.9 L1282.5 687.8 L1283.1 700.7 L1283.7 691.6 L1284.3 681.6 L1284.9 698.1 L1286.3 697.8 L1286.9 691.7 L1287.5 699.6 L1289.0 691.8 L1289.6 676.6 L1290.2 703.0 L1290.6 695.6 L1291.2 683.2 L1291.8 702.9 L1292.8 695.6 L1293.4 677.0 L1294.0 699.9 L1294.6 693.6 L1295.2 689.8 L1295.8 699.1 L1296.8 693.6 L1297.4 679.5 L1298.0 700.8 L1298.4 696.0 L1299.0 691.5 L1299.6 702.3 L1300.5 692.6 L1301.1 693.4 L1301.7 699.2 L1302.7 693.1 L1303.3 683.9 L1303.9 700.9 L1305.7 696.2 L1306.3 679.9 L1306.9 700.5 L1307.7 693.0 L1308.3 678.9 L1308.9 702.2 L1310.0 694.5 L1310.6 682.7 L1311.2 700.9 L1312.2 696.2 L1312.8 683.6 L1313.4 699.2 L1314.8 694.3 L1315.4 685.8 L1316.0 699.3 L1317.3 692.2 L1317.9 681.2 L1318.5 697.9 L1320.4 696.6 L1321.0 692.4 L1321.6 701.6 L1322.3 692.8 L1322.9 682.6 L1323.5 702.3 L1324.2 691.3 L1324.8 691.9 L1325.4 701.3 L1326.1 697.8 L1326.7 688.3 L1327.3 701.4 L1329.0 695.5 L1329.6 683.6 L1330.2 697.1 L1332.0 697.0 L1332.6 688.1 L1333.2 699.5 L1335.3 697.9 L1335.9 694.0 L1336.5 697.6 L1337.7 697.9 L1338.3 685.3 L1338.9 701.3 L1341.1 694.0 L1341.7 677.7 L1342.3 697.9 L1342.9 697.7 L1343.5 681.2 L1344.1 701.0 L1345.0 695.6 L1345.6 683.2 L1346.2 698.5 L1347.9 691.2 L1348.5 690.4 L1349.1 697.4 L1350.3 692.6 L1350.9 681.5 L1351.5 699.4 L1353.1 694.7 L1353.7 689.3 L1354.3 700.6 L1355.4 695.8 L1356.0 690.2 L1356.6 701.2 L1357.2 695.6 L1357.8 679.5 L1358.4 702.2 L1360.2 696.0 L1360.8 685.1 L1361.4 698.9 L1363.0 693.4 L1363.6 692.5 L1364.2 700.0 L1366.1 697.4 L1366.7 681.7 L1367.3 702.2" fill="none" stroke="#586264" stroke-width="0.9" opacity="0.3"/>
<path d="M1088 688.5 H1368" stroke="#2c8397" stroke-width="1" opacity="0.3"/>
<rect x="1074" y="710" width="294" height="12" fill="#7c7c7c"/>
<rect x="1074.5" y="710.5" width="12" height="11" fill="#7f7f7f" stroke="#737373"/>
<path d="M186 905.5 H947" stroke="#7a7b7c" stroke-width="1"/>
<path d="M186 917.5 H947" stroke="#7a7b7c" stroke-width="1"/>
<path d="M198.5 906 V926" stroke="#787a7b" stroke-width="1"/>
<path d="M288.5 906 V926" stroke="#787a7b" stroke-width="1"/>
<path d="M378.5 906 V926" stroke="#787a7b" stroke-width="1"/>
<path d="M468.5 906 V926" stroke="#787a7b" stroke-width="1"/>
<path d="M558.5 906 V926" stroke="#787a7b" stroke-width="1"/>
<path d="M648.5 906 V926" stroke="#787a7b" stroke-width="1"/>
<path d="M739.5 906 V926" stroke="#787a7b" stroke-width="1"/>
<path d="M829.5 906 V926" stroke="#787a7b" stroke-width="1"/>
<path d="M919.5 906 V926" stroke="#787a7b" stroke-width="1"/>
<path d="M186.0 910.6 L204.4 912.7 L205.9 912.2 L207.9 909.8 L231.2 912.8 L232.7 912.2 L234.7 909.6 L252.6 913.0 L254.1 912.2 L256.1 909.7 L276.0 913.1 L277.5 912.2 L279.5 909.9 L304.8 912.7 L306.3 912.2 L308.3 910.0 L327.5 912.8 L329.0 912.2 L331.0 910.2 L353.5 912.9 L355.0 912.2 L357.0 910.0 L375.4 912.9 L376.9 912.2 L378.9 910.0 L399.4 912.3 L400.9 912.2 L402.9 910.2 L424.9 912.9 L426.4 912.2 L428.4 910.2 L452.7 913.0 L454.2 912.2 L456.2 909.8 L481.2 912.7 L482.7 912.2 L484.7 910.2 L510.4 912.4 L511.9 912.2 L513.9 909.6 L533.6 913.1 L535.1 912.2 L537.1 909.8 L560.6 912.5 L562.1 912.2 L564.1 909.9 L585.3 912.6 L586.8 912.2 L588.8 910.0 L611.9 913.0 L613.4 912.2 L615.4 910.0 L641.6 913.0 L643.1 912.2 L645.1 910.3 L668.9 912.4 L670.4 912.2 L672.4 910.2 L698.9 913.0 L700.4 912.2 L702.4 910.0 L726.6 912.5 L728.1 912.2 L730.1 910.2 L753.1 912.5 L754.6 912.2 L756.6 909.6 L782.1 913.1 L783.6 912.2 L785.6 909.6 L810.6 912.6 L812.1 912.2 L814.1 909.6 L834.5 912.9 L836.0 912.2 L838.0 910.2 L856.2 912.8 L857.7 912.2 L859.7 909.5 L884.0 912.6 L885.5 912.2 L887.5 910.2 L914.1 912.7 L915.6 912.2 L917.6 910.3 L938.2 912.4 L939.7 912.2 L941.7 910.0 L944.0 911.0 L947.0 907.2" fill="none" stroke="#1f7790" stroke-width="2" stroke-linejoin="round" opacity="1" />
<path d="M198 995 L198.0 994.1 L199.0 979.4 L201.9 995.5 L204.0 972.1 L204.1 996.8 L204.9 980.9 L206.9 995.0 L208.7 983.3 L209.3 991.2 L210.8 975.8 L213.3 998.5 L214.6 981.4 L216.9 993.2 L218.7 973.6 L220.5 991.0 L221.7 978.7 L223.0 998.9 L224.1 976.5 L226.9 990.6 L228.3 986.1 L230.0 994.7 L232.1 972.4 L232.3 991.3 L233.9 981.5 L236.2 990.1 L237.2 975.2 L239.4 990.9 L240.9 972.3 L243.5 994.4 L245.2 978.7 L245.7 991.9 L247.3 981.3 L249.8 996.1 L251.4 972.9 L252.1 1000.9 L254.3 976.3 L254.4 1000.5 L255.5 983.3 L257.7 994.0 L259.5 972.7 L261.0 991.0 L262.3 984.4 L264.9 995.0 L266.3 981.3 L269.1 990.2 L271.0 981.2 L271.8 992.3 L273.2 978.9 L274.5 996.9 L275.5 973.4 L278.2 998.6 L280.2 972.4 L281.3 992.7 L283.2 983.4 L284.3 1000.6 L285.6 975.7 L287.1 994.1 L288.8 985.8 L289.5 992.8 L290.3 985.5 L293.6 1000.4 L295.8 974.8 L296.9 990.7 L298.0 972.2 L299.8 1000.6 L301.1 981.8 L302.1 991.5 L303.0 981.0 L305.3 990.7 L306.8 983.1 L308.9 994.2 L310.9 984.2 L311.3 998.5 L313.3 983.4 L314.3 990.5 L315.9 973.6 L316.7 990.9 L318.6 982.1 L319.2 991.9 L320.7 972.2 L322.4 991.9 L323.9 978.2 L326.5 1000.4 L327.4 980.6 L330.7 996.0 L332.2 986.2 L333.9 990.7 L335.6 986.6 L337.1 998.0 L338.9 976.8 L339.3 995.0 L340.8 983.2 L342.7 996.6 L344.0 972.8 L346.6 999.1 L348.5 975.7 L350.0 990.4 L351.7 986.0 L353.4 994.5 L354.3 982.8 L355.8 992.0 L356.7 981.7 L358.6 995.9 L359.4 979.5 L362.3 998.6 L363.1 977.3 L366.4 1000.7 L368.6 981.4 L370.2 993.8 L371.3 973.7 L373.9 992.4 L374.9 975.1 L376.2 1000.7 L377.5 987.0 L379.8 995.7 L381.1 979.5 L383.2 992.8 L384.7 975.8 L385.6 1000.4 L386.5 979.0 L387.9 990.6 L389.0 984.8 L391.7 992.4 L392.6 981.7 L394.4 998.8 L396.5 976.8 L398.1 1000.2 L400.1 986.4 L402.1 991.0 L403.4 987.5 L404.7 995.4 L405.9 981.7 L408.5 992.3 L409.7 978.4 L411.5 996.3 L412.9 981.8 L413.9 993.6 L415.0 978.4 L417.1 997.8 L418.8 975.0 L419.4 993.7 L420.8 982.0 L422.8 999.7 L424.6 984.2 L425.2 993.7 L426.0 980.7 L428.4 999.5 L429.7 979.5 L432.3 991.1 L434.1 980.2 L434.9 990.8 L435.7 980.5 L438.9 991.6 L439.9 972.7 L441.1 1000.9 L442.8 985.2 L444.0 995.6 L445.0 986.2 L447.5 993.0 L448.8 977.7 L450.4 996.7 L452.4 974.9 L453.6 997.5 L454.4 972.2 L456.7 997.4 L458.7 985.9 L460.3 991.6 L461.8 976.4 L463.8 993.6 L465.7 975.7 L466.6 996.0 L468.7 981.6 L468.7 998.6 L470.4 975.0 L470.9 992.3 L472.4 974.2 L474.9 992.2 L476.6 975.5 L477.8 1001.0 L479.9 985.5 L481.4 990.7 L483.3 979.9 L484.2 997.0 L486.4 979.4 L487.5 1000.6 L488.4 986.7 L490.2 998.4 L492.4 986.2 L492.6 1000.3 L494.2 980.5 L496.1 991.9 L497.0 987.6 L500.0 992.2 L502.0 981.3 L502.6 993.3 L503.5 974.1 L505.5 995.0 L507.7 984.5 L507.6 991.6 L509.2 974.8 L510.0 995.8 L511.7 982.7 L513.9 1000.1 L514.9 984.6 L516.7 994.4 L517.9 987.4 L519.8 999.3 L521.5 974.9 L522.0 995.7 L523.2 987.4 L525.4 993.8 L526.2 987.2 L527.8 995.8 L529.0 972.9 L531.7 990.2 L533.1 975.3 L533.9 992.5 L535.0 977.0 L537.3 994.1 L539.0 987.0 L540.0 996.1 L540.9 986.6 L543.7 990.5 L544.5 975.4 L547.5 993.9 L549.1 983.4 L551.1 997.8 L552.9 973.2 L555.2 996.3 L556.7 972.9 L559.0 997.3 L561.1 977.8 L561.8 999.8 L562.6 980.2 L565.9 995.0 L567.1 977.0 L569.7 998.2 L570.6 980.5 L573.6 997.5 L574.7 985.1 L576.2 990.7 L578.3 979.2 L579.1 992.0 L580.8 987.3 L582.8 994.7 L583.7 982.3 L585.8 1000.4 L588.0 978.2 L589.9 991.9 L590.7 987.7 L592.5 991.3 L594.2 972.1 L595.0 994.2 L596.2 981.8 L599.1 999.7 L600.7 975.0 L602.6 998.2 L604.6 974.3 L605.0 997.2 L606.5 979.6 L608.7 993.5 L610.4 982.3 L612.4 996.5 L614.1 979.4 L615.4 994.5 L617.3 973.4 L619.0 995.3 L620.6 973.2 L622.2 997.1 L624.0 974.4 L625.4 996.4 L626.2 987.0 L628.0 990.9 L630.1 983.2 L631.5 991.9 L632.3 984.2 L635.4 994.9 L637.0 980.2 L639.1 998.5 L640.2 978.0 L643.3 993.5 L644.8 983.1 L647.2 997.7 L649.3 977.2 L651.3 998.7 L653.0 976.1 L655.1 994.5 L656.6 973.1 L658.9 990.5 L660.0 979.2 L662.7 996.3 L663.7 986.1 L666.4 993.2 L667.9 985.9 L669.1 998.1 L670.1 972.9 L671.3 991.1 L673.1 986.6 L675.1 994.1 L676.2 976.0 L678.6 998.2 L680.1 987.6 L681.8 997.9 L683.0 978.5 L684.4 992.8 L686.5 983.1 L688.0 990.2 L689.6 974.9 L690.2 996.6 L692.2 980.0 L693.1 999.0 L694.1 980.7 L695.8 993.9 L697.9 984.9 L698.0 994.0 L699.5 973.4 L700.8 994.9 L702.9 975.5 L704.9 992.8 L706.5 982.0 L707.2 998.7 L708.4 973.0 L709.6 991.3 L710.7 985.1 L711.9 997.5 L713.0 986.3 L714.1 991.4 L715.9 986.5 L717.6 995.3 L719.0 981.4 L720.2 991.7 L721.7 982.3 L722.8 999.8 L724.4 977.9 L726.2 990.0 L728.1 982.4 L730.1 995.7 L732.1 983.9 L734.2 991.8 L735.5 976.4 L736.3 990.9 L737.1 975.8 L739.1 995.3 L741.1 972.1 L742.7 998.0 L743.8 972.8 L746.5 996.0 L747.9 982.3 L750.6 999.9 L751.7 975.4 L752.8 990.4 L754.8 975.5 L755.3 993.0 L756.6 981.2 L759.0 992.9 L760.8 980.8 L761.3 997.6 L763.3 972.7 L765.0 1000.2 L767.1 983.2 L768.2 996.4 L769.6 974.8 L771.8 990.8 L772.9 977.6 L774.1 997.6 L775.6 983.7 L776.8 994.9 L778.3 983.7 L779.2 994.9 L780.7 988.0 L781.7 995.2 L783.1 979.2 L785.3 996.9 L787.1 977.4 L787.6 990.8 L788.8 985.2 L791.5 993.0 L792.8 973.9 L795.5 992.4 L797.2 987.5 L799.4 993.5 L800.4 980.2 L801.5 990.5 L803.3 972.7 L804.8 1000.3 L807.0 973.1 L807.7 999.6 L809.5 977.8 L811.4 998.0 L812.8 974.9 L813.5 992.9 L814.6 972.8 L816.1 994.4 L817.2 986.6 L818.3 994.5 L819.7 972.9 L820.5 993.8 L821.3 980.3 L823.5 992.0 L825.4 974.5 L826.5 996.1 L828.3 977.7 L829.8 997.9 L831.1 987.2 L833.9 992.1 L834.9 972.3 L836.8 994.3 L838.5 977.7 L839.5 997.4 L841.6 979.7 L843.7 994.2 L845.8 977.9 L847.5 991.3 L848.7 986.0 L850.4 995.1 L852.6 976.9 L853.3 993.6 L854.9 980.1 L856.5 990.7 L858.3 974.9 L860.3 992.2 L861.3 977.4 L863.7 1000.3 L865.4 981.3 L866.9 1000.0 L869.0 981.5 L869.3 991.4 L870.1 974.0 L873.2 995.5 L875.1 987.4 L876.6 994.3 L878.8 982.5 L879.3 990.6 L881.2 973.6 L883.0 998.8 L884.2 985.6 L885.8 999.5 L886.6 976.5 L888.5 997.0 L889.3 982.5 L890.8 992.4 L892.3 974.7 L892.8 995.1 L894.5 985.2 L895.6 991.1 L897.6 985.6 L898.2 996.2 L899.9 980.2 L901.4 990.6 L902.9 983.5 L904.5 991.2 L906.3 981.9 L906.6 990.6 L908.8 972.7 L909.0 990.6 L910.6 982.9 L911.5 998.1 L913.2 981.6 L914.7 990.0 L915.5 983.5 L917.2 998.4 L918.0 979.2 L919.6 993.6 L920.6 980.4 L922.3 990.2 L924.2 972.4 L925.0 992.7 L926.8 983.5 L928.9 996.6 L931.0 972.3" fill="none" stroke="#5a9799" stroke-width="1" opacity="0.5"/>
<rect x="186" y="1007" width="761" height="11.5" fill="#7c7c7c"/>
<rect x="186.5" y="1007.5" width="12" height="10.5" fill="#7f7f7f" stroke="#737373"/>
<rect x="927.5" y="1007.5" width="19" height="10.5" fill="#7f7f7f" stroke="#737373"/>
<rect x="927.5" y="1007.5" width="6" height="10.5" fill="#767676"/>
<rect x="930.5" y="975.5" width="8" height="19" rx="1" fill="#858585" stroke="#474849" stroke-width="1"/>
<path d="M933.5 979 V991 M935.5 979 V991" stroke="#474849" stroke-width="0.8"/></svg>
<span class="t" style="left:201px;top:321.5px;font:400 11.5px/15px 'DejaVu Sans Condensed','DejaVu Sans',sans-serif;color:#3b3c3d;letter-spacing:0.793px;">Zoom</span>
<svg style="left:239px;top:328px" width="5" height="4" viewBox="0 0 5 4"><path d="M0.4 0.4 H4.6 L2.5 3.4 Z" fill="#3b3c3d"/></svg>
<div class="a" style="left:475px;top:315.0px;width:36px;height:26px;border-radius:3px;background:#828588"></div>
<div class="a" style="left:521px;top:315.0px;width:47px;height:26px;border-radius:3px;background:#828588"></div>
<span class="t" style="left:481px;top:320.0px;font:400 12.5px/16px 'Liberation Sans',sans-serif;color:#3f4448;letter-spacing:0.266px;-webkit-text-stroke:0.45px #3f4448;">Live</span>
<span class="t" style="left:527px;top:319.0px;font:400 12.5px/16px 'Liberation Sans',sans-serif;color:#3f4448;letter-spacing:-0.005px;-webkit-text-stroke:0.45px #3f4448;">Raw</span>
<svg style="left:554px;top:326.5px" width="8" height="5" viewBox="0 0 8 5"><path d="M0.6 0.6 H7.4 L4 4.4 Z" fill="#3e4347"/></svg>
<span class="t" style="left:740px;top:320.5px;font:400 11.5px/15px 'DejaVu Sans Condensed','DejaVu Sans',sans-serif;color:#414d61;letter-spacing:0.821px;">Aug 3, 2023</span>
<span class="t" style="left:843px;top:320.5px;font:400 11.5px/15px 'DejaVu Sans Condensed','DejaVu Sans',sans-serif;color:#414d61;letter-spacing:0.678px;">Sep 24, 2023</span>
<svg style="left:730px;top:325px" width="9" height="6" viewBox="0 0 9 6"><path d="M0.5 3.4 H6" stroke="#414d61" stroke-width="1.2"/><path d="M4.6 1 L8 3.4 L4.6 5.6 Z" fill="#414d61"/></svg>
<svg style="left:824px;top:327px" width="9" height="3" viewBox="0 0 9 3"><path d="M0 1.6 H8.6" stroke="#414d61" stroke-width="1.2"/></svg>
<svg style="left:923px;top:325px" width="9" height="6" viewBox="0 0 9 6"><path d="M3 3.4 H8.5" stroke="#414d61" stroke-width="1.2"/><path d="M4.4 1 L1 3.4 L4.4 5.6 Z" fill="#414d61"/></svg>
<span class="t" style="left:158.5px;top:393.5px;font:400 11px/14px 'DejaVu Sans Condensed','DejaVu Sans',sans-serif;color:#454647;letter-spacing:0.036px;">125</span>
<span class="t" style="left:158.5px;top:447.5px;font:400 11px/14px 'DejaVu Sans Condensed','DejaVu Sans',sans-serif;color:#454647;letter-spacing:0.036px;">100</span>
<span class="t" style="left:164.5px;top:501.0px;font:400 11px/14px 'DejaVu Sans Condensed','DejaVu Sans',sans-serif;color:#454647;letter-spacing:0.203px;">75</span>
<span class="t" style="left:164.5px;top:554.5px;font:400 11px/14px 'DejaVu Sans Condensed','DejaVu Sans',sans-serif;color:#454647;letter-spacing:0.203px;">50</span>
<span class="t" style="left:164.5px;top:608.5px;font:400 11px/14px 'DejaVu Sans Condensed','DejaVu Sans',sans-serif;color:#454647;letter-spacing:0.203px;">25</span>
<span class="t" style="left:141px;top:486px;font:400 11px/14px 'DejaVu Sans Condensed','DejaVu Sans',sans-serif;color:#4b4c4d;transform:translate(-50%,-50%) rotate(-90deg);letter-spacing:0.616px;">(psi)</span>
<span class="t" style="left:227.5px;top:629.7px;font:400 11px/14px 'DejaVu Sans Condensed','DejaVu Sans',sans-serif;color:#454647;letter-spacing:0.349px;">7. Aug</span>
<span class="t" style="left:325.0px;top:629.7px;font:400 11px/14px 'DejaVu Sans Condensed','DejaVu Sans',sans-serif;color:#454647;letter-spacing:0.400px;">14. Aug</span>
<span class="t" style="left:427.0px;top:629.7px;font:400 11px/14px 'DejaVu Sans Condensed','DejaVu Sans',sans-serif;color:#454647;letter-spacing:0.400px;">21. Aug</span>
<span class="t" style="left:528.0px;top:629.7px;font:400 11px/14px 'DejaVu Sans Condensed','DejaVu Sans',sans-serif;color:#454647;letter-spacing:0.400px;">28. Aug</span>
<span class="t" style="left:633.5px;top:629.7px;font:400 11px/14px 'DejaVu Sans Condensed','DejaVu Sans',sans-serif;color:#454647;letter-spacing:0.292px;">4. Sep</span>
<span class="t" style="left:731.5px;top:629.7px;font:400 11px/14px 'DejaVu Sans Condensed','DejaVu Sans',sans-serif;color:#454647;letter-spacing:0.350px;">11. Sep</span>
<span class="t" style="left:832.5px;top:629.7px;font:400 11px/14px 'DejaVu Sans Condensed','DejaVu Sans',sans-serif;color:#454647;letter-spacing:0.350px;">18. Sep</span>
<div class="a" style="left:290px;top:744.5px;width:16px;height:2px;background:#2a8799"></div>
<span class="t" style="left:311px;top:737.5px;font:400 12px/16px 'DejaVu Sans Condensed','DejaVu Sans',sans-serif;color:#383939;letter-spacing:0.547px;-webkit-text-stroke:0.35px #383939;">8450_Pressure</span>
<div class="a" style="left:419px;top:744.5px;width:16px;height:2px;background:#5c6164"></div>
<span class="t" style="left:440px;top:737.5px;font:400 12px/16px 'DejaVu Sans Condensed','DejaVu Sans',sans-serif;color:#383939;letter-spacing:0.547px;-webkit-text-stroke:0.35px #383939;">8468_Pressure</span>
<div class="a" style="left:548px;top:744.5px;width:16px;height:2px;background:#9a5b47"></div>
<span class="t" style="left:569px;top:737.5px;font:400 12px/16px 'DejaVu Sans Condensed','DejaVu Sans',sans-serif;color:#383939;letter-spacing:0.547px;-webkit-text-stroke:0.35px #383939;">8482_Pressure</span>
<div class="a" style="left:678px;top:744.5px;width:16px;height:2px;background:#a08a32"></div>
<span class="t" style="left:699px;top:737.5px;font:400 12px/16px 'DejaVu Sans Condensed','DejaVu Sans',sans-serif;color:#383939;letter-spacing:0.470px;-webkit-text-stroke:0.35px #383939;">8486_Pressure</span>
<span class="t" style="left:1082px;top:321.5px;font:400 11.5px/15px 'DejaVu Sans Condensed','DejaVu Sans',sans-serif;color:#3b3c3d;letter-spacing:0.793px;">Zoom</span>
<svg style="left:1120px;top:328px" width="5" height="4" viewBox="0 0 5 4"><path d="M0.4 0.4 H4.6 L2.5 3.4 Z" fill="#3b3c3d"/></svg>
<div class="a" style="left:1357px;top:315px;width:11px;height:26px;border-radius:3px 0 0 3px;background:#828588"></div>
<span class="t" style="left:1362.5px;top:320.0px;font:400 12.5px/16px 'Liberation Sans',sans-serif;color:#3f4448;-webkit-text-stroke:0.45px #3f4448;">Live</span>
<span class="t" style="left:1047px;top:406.0px;font:400 11px/14px 'DejaVu Sans Condensed','DejaVu Sans',sans-serif;color:#454647;letter-spacing:-0.016px;">1k</span>
<span class="t" style="left:1052px;top:474.0px;font:400 11px/14px 'DejaVu Sans Condensed','DejaVu Sans',sans-serif;color:#454647;letter-spacing:0.703px;">0</span>
<span class="t" style="left:1041px;top:541.5px;font:400 11px/14px 'DejaVu Sans Condensed','DejaVu Sans',sans-serif;color:#454647;letter-spacing:-0.776px;">−1k</span>
<span class="t" style="left:1041px;top:608.5px;font:400 11px/14px 'DejaVu Sans Condensed','DejaVu Sans',sans-serif;color:#454647;letter-spacing:-0.776px;">−2k</span>
<span class="t" style="left:1022px;top:486.5px;font:400 11px/14px 'DejaVu Sans Condensed','DejaVu Sans',sans-serif;color:#4b4c4d;transform:translate(-50%,-50%) rotate(-90deg);letter-spacing:0.734px;">(ft, gpm)</span>
<span class="t" style="left:1105.0px;top:629.7px;font:400 11px/14px 'DejaVu Sans Condensed','DejaVu Sans',sans-serif;color:#454647;letter-spacing:0.400px;">28. Aug</span>
<span class="t" style="left:1202.0px;top:629.7px;font:400 11px/14px 'DejaVu Sans Condensed','DejaVu Sans',sans-serif;color:#454647;letter-spacing:0.400px;">30. Aug</span>
<span class="t" style="left:1303.0px;top:629.7px;font:400 11px/14px 'DejaVu Sans Condensed','DejaVu Sans',sans-serif;color:#454647;letter-spacing:0.292px;">1. Sep</span>
<div class="a" style="left:1127px;top:744.5px;width:16px;height:2px;background:#2c8397"></div>
<span class="t" style="left:1148px;top:737.5px;font:400 12px/16px 'DejaVu Sans Condensed','DejaVu Sans',sans-serif;color:#383939;letter-spacing:0.646px;-webkit-text-stroke:0.35px #383939;">T5004_Tank_Level</span>
<div class="a" style="left:1279px;top:744.5px;width:16px;height:2px;background:#5c6164"></div>
<span class="t" style="left:1300px;top:737.5px;font:400 12px/16px 'DejaVu Sans Condensed','DejaVu Sans',sans-serif;color:#383939;letter-spacing:0.451px;-webkit-text-stroke:0.35px #383939;">T5004_Flow_Rate</span>
<span class="t" style="left:194px;top:876.5px;font:400 11.5px/15px 'DejaVu Sans Condensed','DejaVu Sans',sans-serif;color:#3b3c3d;letter-spacing:0.793px;">Zoom</span>
<svg style="left:232px;top:883px" width="5" height="4" viewBox="0 0 5 4"><path d="M0.4 0.4 H4.6 L2.5 3.4 Z" fill="#3b3c3d"/></svg>
<div class="a" style="left:475px;top:870.0px;width:36px;height:26px;border-radius:3px;background:#828588"></div>
<div class="a" style="left:521px;top:870.0px;width:47px;height:26px;border-radius:3px;background:#828588"></div>
<span class="t" style="left:481px;top:875.0px;font:400 12.5px/16px 'Liberation Sans',sans-serif;color:#3f4448;letter-spacing:0.266px;-webkit-text-stroke:0.45px #3f4448;">Live</span>
<span class="t" style="left:527px;top:874.0px;font:400 12.5px/16px 'Liberation Sans',sans-serif;color:#3f4448;letter-spacing:-0.005px;-webkit-text-stroke:0.45px #3f4448;">Raw</span>
<svg style="left:554px;top:881.5px" width="8" height="5" viewBox="0 0 8 5"><path d="M0.6 0.6 H7.4 L4 4.4 Z" fill="#3e4347"/></svg>
<span class="t" style="left:732px;top:875.5px;font:400 11.5px/15px 'DejaVu Sans Condensed','DejaVu Sans',sans-serif;color:#414d61;letter-spacing:0.844px;">Mar 29, 2022</span>
<span class="t" style="left:840px;top:875.5px;font:400 11.5px/15px 'DejaVu Sans Condensed','DejaVu Sans',sans-serif;color:#414d61;letter-spacing:0.812px;">Apr 15, 2022</span>
<svg style="left:718px;top:880px" width="9" height="6" viewBox="0 0 9 6"><path d="M0.5 3.4 H6" stroke="#414d61" stroke-width="1.2"/><path d="M4.6 1 L8 3.4 L4.6 5.6 Z" fill="#414d61"/></svg>
<svg style="left:821px;top:882px" width="9" height="3" viewBox="0 0 9 3"><path d="M0 1.6 H8.6" stroke="#414d61" stroke-width="1.2"/></svg>
<svg style="left:921px;top:880px" width="9" height="6" viewBox="0 0 9 6"><path d="M3 3.4 H8.5" stroke="#414d61" stroke-width="1.2"/><path d="M4.4 1 L1 3.4 L4.4 5.6 Z" fill="#414d61"/></svg>
<span class="t" style="left:158px;top:904.5px;font:400 11px/14px 'DejaVu Sans Condensed','DejaVu Sans',sans-serif;color:#454647;letter-spacing:0.203px;">42</span>
<span class="t" style="left:141px;top:912px;font:400 11px/14px 'DejaVu Sans Condensed','DejaVu Sans',sans-serif;color:#4b4c4d;transform:translate(-50%,-50%) rotate(-90deg);letter-spacing:0.616px;">(psi)</span>
<span class="t" style="left:179.0px;top:925.8px;font:400 11px/14px 'DejaVu Sans Condensed','DejaVu Sans',sans-serif;color:#454647;letter-spacing:0.350px;">30. Mar</span>
<span class="t" style="left:273.0px;top:925.8px;font:400 11px/14px 'DejaVu Sans Condensed','DejaVu Sans',sans-serif;color:#454647;letter-spacing:0.383px;">1. Apr</span>
<span class="t" style="left:363.5px;top:925.8px;font:400 11px/14px 'DejaVu Sans Condensed','DejaVu Sans',sans-serif;color:#454647;letter-spacing:0.383px;">3. Apr</span>
<span class="t" style="left:453.5px;top:925.8px;font:400 11px/14px 'DejaVu Sans Condensed','DejaVu Sans',sans-serif;color:#454647;letter-spacing:0.383px;">5. Apr</span>
<span class="t" style="left:544.0px;top:925.8px;font:400 11px/14px 'DejaVu Sans Condensed','DejaVu Sans',sans-serif;color:#454647;letter-spacing:0.383px;">7. Apr</span>
<span class="t" style="left:634.0px;top:925.8px;font:400 11px/14px 'DejaVu Sans Condensed','DejaVu Sans',sans-serif;color:#454647;letter-spacing:0.383px;">9. Apr</span>
<span class="t" style="left:721.0px;top:925.8px;font:400 11px/14px 'DejaVu Sans Condensed','DejaVu Sans',sans-serif;color:#454647;letter-spacing:0.429px;">11. Apr</span>
<span class="t" style="left:811.0px;top:925.8px;font:400 11px/14px 'DejaVu Sans Condensed','DejaVu Sans',sans-serif;color:#454647;letter-spacing:0.429px;">13. Apr</span>
<span class="t" style="left:901.5px;top:925.8px;font:400 11px/14px 'DejaVu Sans Condensed','DejaVu Sans',sans-serif;color:#454647;letter-spacing:0.429px;">15. Apr</span>
<div class="a" style="left:483px;top:1040.5px;width:16px;height:2px;background:#2a8799"></div>
<span class="t" style="left:504px;top:1033.5px;font:400 12px/16px 'DejaVu Sans Condensed','DejaVu Sans',sans-serif;color:#383939;letter-spacing:0.547px;-webkit-text-stroke:0.35px #383939;">8450_Pressure</span>
<div class="a" style="left:986px;top:886px;width:382px;height:1px;background:#727475"></div>
<div class="a" style="left:992px;top:923px;width:376px;height:1px;background:#747677"></div>
<div class="a" style="left:992px;top:959px;width:376px;height:1px;background:#747677"></div>
<div class="a" style="left:992px;top:995px;width:376px;height:1px;background:#747677"></div>
<div class="a" style="left:1129px;top:888px;width:142px;height:35px;background:#72a05a"></div>
<div class="a" style="left:1129px;top:924px;width:142px;height:35px;background:#b5a044"></div>
<div class="a" style="left:1129px;top:960px;width:142px;height:35px;background:#7d4523"></div>
<span class="t" style="left:997px;top:855.5px;font:400 13.5px/18px 'Liberation Sans',sans-serif;color:#353637;letter-spacing:0.132px;-webkit-text-stroke:0.45px #353637;">Sensor Name</span>
<span class="t" style="left:1138px;top:855.5px;font:400 13.5px/18px 'Liberation Sans',sans-serif;color:#353637;letter-spacing:-0.103px;-webkit-text-stroke:0.45px #353637;">Close</span>
<svg style="left:1180px;top:859px" width="12" height="13" viewBox="0 0 12 13"><path d="M6 1.4 V11 M1.8 7 L6 11.2 L10.2 7" fill="none" stroke="#3e4143" stroke-width="1.3" stroke-linecap="round" stroke-linejoin="round"/></svg>
<span class="t" style="left:1280px;top:855.5px;font:400 13.5px/18px 'Liberation Sans',sans-serif;color:#353637;letter-spacing:0.746px;-webkit-text-stroke:0.45px #353637;">Unit</span>
<span class="t" style="left:998px;top:896.5px;font:400 13.5px/18px 'Liberation Sans',sans-serif;color:#444546;letter-spacing:-0.381px;">T5000_Tank_Level</span>
<span class="t" style="left:998px;top:932.5px;font:400 13.5px/18px 'Liberation Sans',sans-serif;color:#444546;letter-spacing:-0.274px;">8450_Pressure</span>
<span class="t" style="left:998px;top:968.5px;font:400 13.5px/18px 'Liberation Sans',sans-serif;color:#444546;letter-spacing:-0.271px;">P-140_Flow_Rate</span>
<span class="t" style="left:1139px;top:896.5px;font:400 13.5px/18px 'Liberation Sans',sans-serif;color:#315d24;letter-spacing:-0.007px;">88.550003051757...</span>
<span class="t" style="left:1139px;top:932.5px;font:400 13.5px/18px 'Liberation Sans',sans-serif;color:#65551a;letter-spacing:-0.007px;">53.729999542236...</span>
<span class="t" style="left:1139px;top:968.5px;font:400 13.5px/18px 'Liberation Sans',sans-serif;color:#5a2f15;letter-spacing:-0.016px;">0</span>
<span class="t" style="left:1272px;top:896.5px;font:400 13.5px/18px 'Liberation Sans',sans-serif;color:#444546;letter-spacing:-0.500px;">Ft</span>
<span class="t" style="left:1272px;top:932.5px;font:400 13.5px/18px 'Liberation Sans',sans-serif;color:#444546;letter-spacing:-0.089px;">psi</span>
<span class="t" style="left:1272px;top:968.5px;font:400 13.5px/18px 'Liberation Sans',sans-serif;color:#444546;letter-spacing:0.578px;">gpm</span>
<div class="a" style="left:986px;top:1003px;width:382px;height:13px;background:#7b7c7d"></div>
<div class="a" style="left:1003px;top:1003px;width:365px;height:13px;background:#696a6b;border-radius:6px 0 0 6px"></div>
<svg style="left:992px;top:1005px" width="6" height="8" viewBox="0 0 6 8"><path d="M5 0.6 L1 4 L5 7.4 Z" fill="#505152"/></svg>
<svg style="left:1258px;top:1044px" width="9" height="12" viewBox="0 0 9 12"><path d="M6.6 2.2 L2.4 6 L6.6 9.8" fill="none" stroke="#656768" stroke-width="1.5" stroke-linecap="round" stroke-linejoin="round"/></svg>
<div class="a" style="left:1285px;top:1034px;width:32px;height:32px;border-radius:16px;background:#14768e"></div>
<span class="t" style="left:1297.5px;top:1041.5px;font:400 13px/17px 'Liberation Sans',sans-serif;color:#0e4c5c;letter-spacing:-0.234px;">1</span>
<span class="t" style="left:1334.5px;top:1041.0px;font:400 13px/17px 'Liberation Sans',sans-serif;color:#3a3b3c;letter-spacing:0.266px;">2</span>
<div class="a" style="left:1300px;top:137px;width:620px;height:943px;overflow:hidden"><div class="a" style="left:68px;top:0;width:552px;height:943px;background:#fff;box-shadow:0 8px 10px -5px rgba(0,0,0,.2),0 16px 24px 2px rgba(0,0,0,.14),0 6px 30px 5px rgba(0,0,0,.12)"></div></div>
<span class="t" style="left:1392px;top:162.0px;font:400 18.5px/24px 'Liberation Sans',sans-serif;color:#1a9dbb;letter-spacing:-0.655px;">Create Links</span>
<div class="a" style="left:1368px;top:209px;width:552px;height:1px;background:#dedede"></div>
<svg style="left:1391px;top:228px" width="22" height="22" viewBox="0 0 22 22"><circle cx="11" cy="11.5" r="8.9" fill="#fff" stroke="#595959" stroke-width="1.9"/></svg>
<span class="t" style="left:1423px;top:230.0px;font:400 15.5px/20px 'Liberation Sans',sans-serif;color:#3c3c3c;letter-spacing:-0.047px;">External Link</span>
<svg style="left:1655px;top:228px" width="22" height="22" viewBox="0 0 22 22"><circle cx="11" cy="11.5" r="8.9" fill="#fff" stroke="#17a0c4" stroke-width="2"/><circle cx="11" cy="11.5" r="4.9" fill="#0b9bd3"/></svg>
<span class="t" style="left:1687px;top:230.0px;font:400 15.5px/20px 'Liberation Sans',sans-serif;color:#3c3c3c;letter-spacing:0.196px;">Internal Link</span>
<div class="a" style="left:1392px;top:280px;width:504px;height:56px;border:2px solid #128fb3;border-radius:5px;background:#fff"></div>
<div class="a" style="left:1401px;top:278px;width:88px;height:6px;background:#fff"></div>
<span class="t" style="left:1406px;top:273.5px;font:400 11.5px/15px 'Liberation Sans',sans-serif;color:#2a9bb9;letter-spacing:0.183px;">Internal Links<span style="font-size:10px"> *</span></span>
<span class="t" style="left:1406px;top:298.9px;font:400 16px/21px 'Liberation Sans',sans-serif;color:#3c3c3c;letter-spacing:-0.466px;">Forms</span>
<svg style="left:1872px;top:304px" width="10" height="6" viewBox="0 0 10 6"><path d="M0.2 5.6 L5 0.6 L9.8 5.6 Z" fill="#555"/></svg>
<div class="a" style="left:1392px;top:340px;width:504px;height:228px;background:#fff;border-radius:4px;box-shadow:0 5px 5px -3px rgba(0,0,0,.2),0 8px 10px 1px rgba(0,0,0,.14),0 3px 14px 2px rgba(0,0,0,.12)"></div>
<div class="a" style="left:1392px;top:380px;width:504px;height:36px;background:#e9f5fb"></div>
<span class="t" style="left:1408px;top:352.5px;font:400 15.5px/20px 'Liberation Sans',sans-serif;color:#3a3a3a;">Analytics</span>
<span class="t" style="left:1408px;top:388.5px;font:400 15.5px/20px 'Liberation Sans',sans-serif;color:#3a3a3a;letter-spacing:-0.184px;">Forms</span>
<span class="t" style="left:1408px;top:424.5px;font:400 15.5px/20px 'Liberation Sans',sans-serif;color:#3a3a3a;letter-spacing:0.081px;">Image</span>
<span class="t" style="left:1408px;top:460.5px;font:400 15.5px/20px 'Liberation Sans',sans-serif;color:#3a3a3a;letter-spacing:0.275px;">Incident</span>
<span class="t" style="left:1408px;top:496.5px;font:400 15.5px/20px 'Liberation Sans',sans-serif;color:#3a3a3a;letter-spacing:0.078px;">Report</span>
<span class="t" style="left:1408px;top:532.5px;font:400 15.5px/20px 'Liberation Sans',sans-serif;color:#3a3a3a;letter-spacing:-0.070px;">Sensor Data Export</span>
<div class="a" style="left:1368px;top:996px;width:552px;height:1px;background:#d8d8d8"></div>
<div class="a" style="left:1733px;top:1021px;width:73px;height:36px;border-radius:4px;background:#f0f2f3"></div>
<span class="t" style="left:1749px;top:1030.0px;font:400 14.2px/18px 'Liberation Sans',sans-serif;color:#3f4346;letter-spacing:-0.529px;-webkit-text-stroke:0.5px #3f4346;">Cancel</span>
<div class="a" style="left:1819px;top:1021px;width:77px;height:36px;border-radius:4px;background:#7dbdd1"></div>
<span class="t" style="left:1835px;top:1030.0px;font:700 14px/18px 'Liberation Sans',sans-serif;color:#ffffff;letter-spacing:-0.409px;">Submit</span>
</div>
</body></html>
